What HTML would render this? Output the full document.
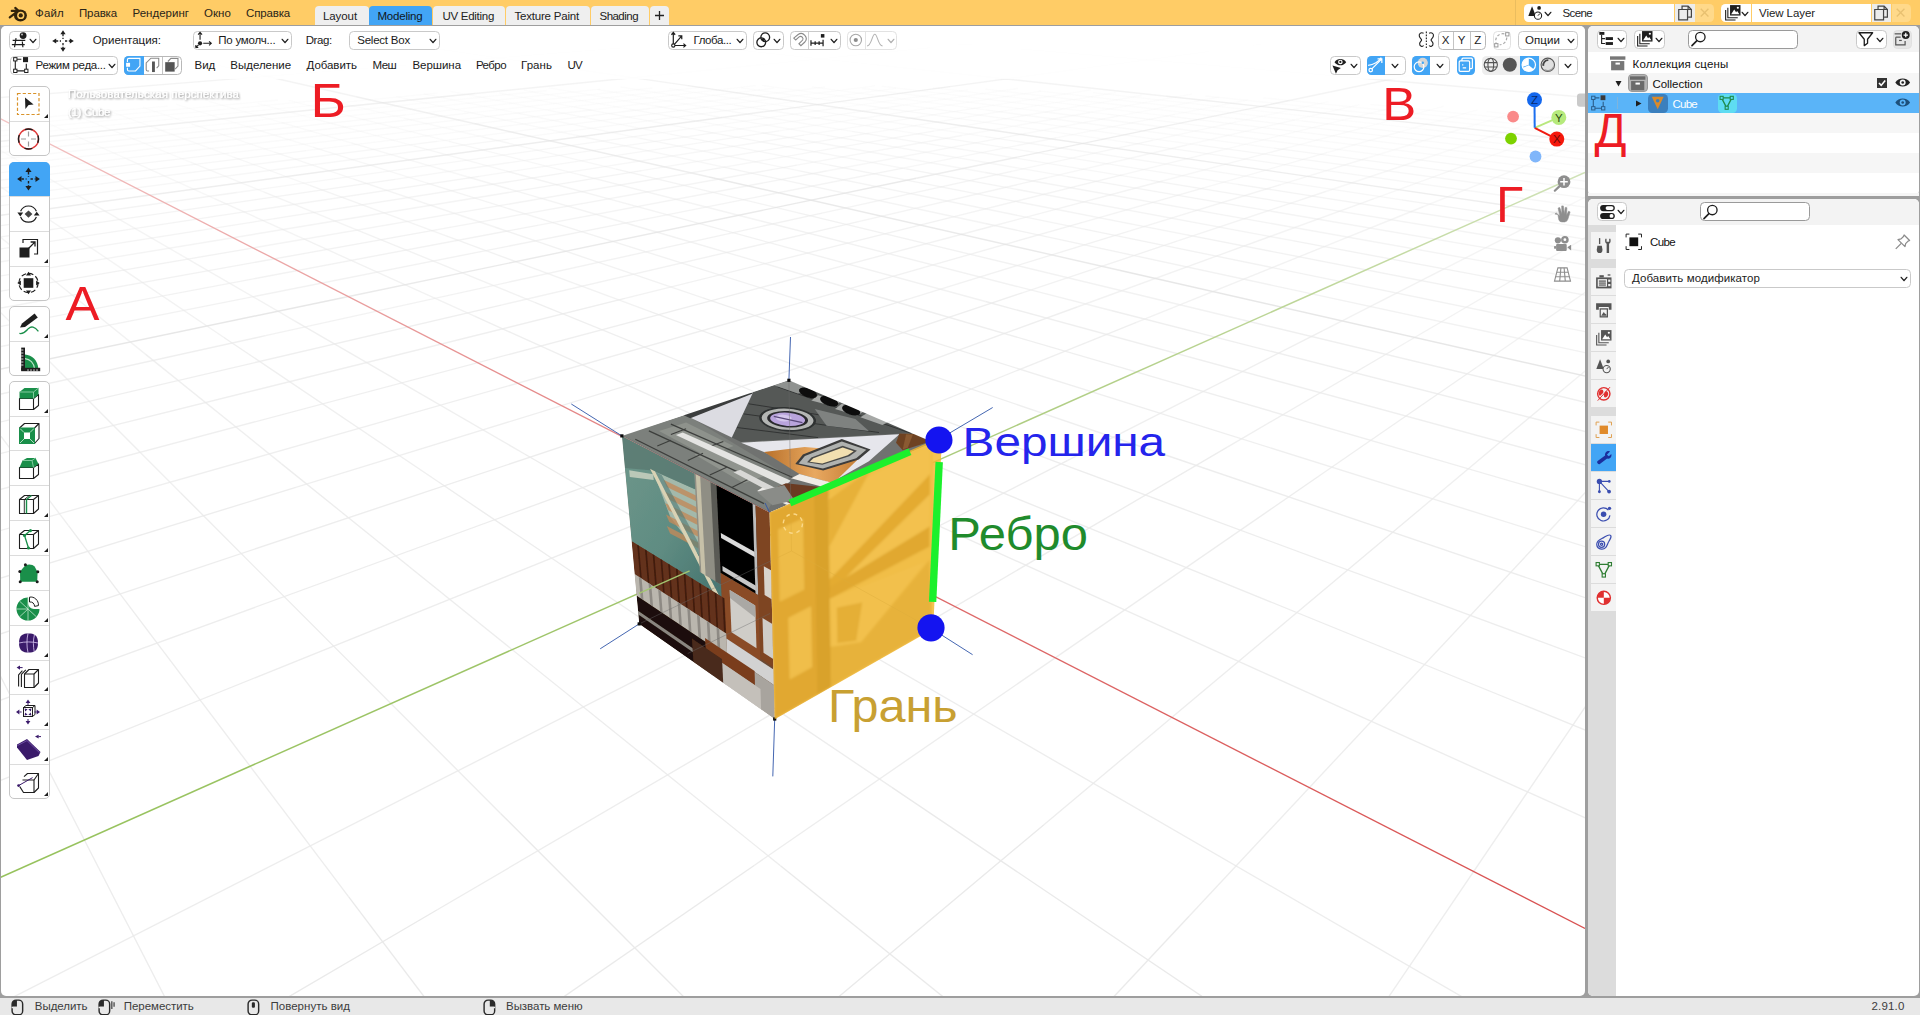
<!DOCTYPE html>
<html><head><meta charset="utf-8"><title>Blender</title>
<style>
html,body{margin:0;padding:0}
html{overflow:hidden;width:1920px;height:1015px}
body{width:1920px;height:1015px;overflow:hidden;position:relative;background:#9e9e9e;font-family:"Liberation Sans",sans-serif;font-size:11.5px;color:#1a1a1a}
.a{position:absolute;overflow:visible}
.t{position:absolute;white-space:nowrap;line-height:1}
.area{position:absolute;overflow:hidden;background:#fff}
.btn{position:absolute;box-sizing:border-box;border:1px solid #c9c9c9;border-radius:4.5px;background:#fff}
.blue{position:absolute;box-sizing:border-box;background:#42a5f5}
.fill{position:absolute;box-sizing:border-box}

</style></head>
<body>
<div class="fill" style="left:0;top:0;width:1920px;height:25px;background:#ffcc66"></div>
<svg class="a" style="left:7.6px;top:4.7px;" width="19.8" height="17.6" viewBox="0 0 18 16"><g fill="none" stroke="#33240c" stroke-linecap="round" stroke-linejoin="round"><path d="M1.6 11.2 L9.6 5.2 M3.4 5.4 H9.2 M9.6 5.2 L6.6 2.6" stroke-width="2"/></g>
<ellipse cx="11.3" cy="9.6" rx="5.9" ry="5.4" fill="#33240c"/><circle cx="11.6" cy="9.5" r="3.3" fill="#ffcc66"/><circle cx="11.6" cy="9.5" r="1.9" fill="#33240c"/></svg>
<span class="t" style="left:35.0px;top:8.27px;font-size:11.5px;color:#2a2418;letter-spacing:0.182px;">Файл</span>
<span class="t" style="left:79.0px;top:8.27px;font-size:11.5px;color:#2a2418;letter-spacing:-0.141px;">Правка</span>
<span class="t" style="left:132.5px;top:8.27px;font-size:11.5px;color:#2a2418;letter-spacing:0.013px;">Рендеринг</span>
<span class="t" style="left:204.0px;top:8.27px;font-size:11.5px;color:#2a2418;letter-spacing:0.069px;">Окно</span>
<span class="t" style="left:246.0px;top:8.27px;font-size:11.5px;color:#2a2418;letter-spacing:-0.159px;">Справка</span>
<div class="fill" style="left:314.5px;top:5.5px;width:54.0px;height:19.5px;background:#efefef;border-radius:4px 4px 0 0"></div>
<span class="t" style="left:323.0px;top:11.07px;font-size:11.5px;color:#222;letter-spacing:-0.089px;">Layout</span>
<div class="fill" style="left:369.0px;top:5.5px;width:63.0px;height:19.5px;background:#42a5f5;border-radius:4px 4px 0 0"></div>
<span class="t" style="left:377.5px;top:11.07px;font-size:11.5px;color:#10151c;letter-spacing:-0.209px;">Modeling</span>
<div class="fill" style="left:433.0px;top:5.5px;width:71.5px;height:19.5px;background:#efefef;border-radius:4px 4px 0 0"></div>
<span class="t" style="left:442.5px;top:11.07px;font-size:11.5px;color:#222;letter-spacing:-0.283px;">UV Editing</span>
<div class="fill" style="left:505.5px;top:5.5px;width:84.0px;height:19.5px;background:#efefef;border-radius:4px 4px 0 0"></div>
<span class="t" style="left:514.5px;top:11.07px;font-size:11.5px;color:#222;letter-spacing:-0.202px;">Texture Paint</span>
<div class="fill" style="left:590.5px;top:5.5px;width:58.0px;height:19.5px;background:#efefef;border-radius:4px 4px 0 0"></div>
<span class="t" style="left:599.5px;top:11.07px;font-size:11.5px;color:#222;letter-spacing:-0.530px;">Shading</span>
<div class="fill" style="left:649.5px;top:5.5px;width:19.0px;height:19.5px;background:#efefef;border-radius:4px 4px 0 0"></div>
<svg class="a" style="left:654.0px;top:10.0px;" width="11.0" height="11.0" viewBox="0 0 11 11"><path d="M5.5 1 V10 M1 5.5 H10" stroke="#222" stroke-width="1.3" fill="none"/></svg>
<div class="fill" style="left:1514.5px;top:0.0px;width:1.0px;height:25.0px;background:#ebbd5e"></div>
<div class="fill" style="left:1524.0px;top:4.0px;width:30.5px;height:18.0px;background:#fff;border-radius:4.5px 0 0 4.5px"></div>
<div class="fill" style="left:1555.0px;top:4.0px;width:119.0px;height:18.0px;background:#fff"></div>
<div class="fill" style="left:1674.5px;top:4.0px;width:20.0px;height:18.0px;background:#ececec"></div>
<div class="fill" style="left:1695.0px;top:4.0px;width:19.0px;height:18.0px;background:#ffd98a;border-radius:0 4.5px 4.5px 0"></div>
<span class="t" style="left:1562.5px;top:8.07px;font-size:11.5px;color:#222;letter-spacing:-0.622px;">Scene</span>
<div class="fill" style="left:1721.0px;top:4.0px;width:30.0px;height:18.0px;background:#fff;border-radius:4.5px 0 0 4.5px"></div>
<div class="fill" style="left:1751.5px;top:4.0px;width:119.5px;height:18.0px;background:#fff"></div>
<div class="fill" style="left:1871.5px;top:4.0px;width:19.5px;height:18.0px;background:#ececec"></div>
<div class="fill" style="left:1891.5px;top:4.0px;width:19.5px;height:18.0px;background:#ffd98a;border-radius:0 4.5px 4.5px 0"></div>
<span class="t" style="left:1759.0px;top:8.07px;font-size:11.5px;color:#222;letter-spacing:-0.068px;">View Layer</span>
<svg class="a" style="left:1543.0px;top:9.0px" width="10" height="10" viewBox="-5 -5 10 10"><path d="M-2.8 -1.6 L0 1.6 L2.8 -1.6" fill="none" stroke="#222" stroke-width="1.4" stroke-linecap="round" stroke-linejoin="round"/></svg>
<svg class="a" style="left:1740.0px;top:9.0px" width="10" height="10" viewBox="-5 -5 10 10"><path d="M-2.8 -1.6 L0 1.6 L2.8 -1.6" fill="none" stroke="#222" stroke-width="1.4" stroke-linecap="round" stroke-linejoin="round"/></svg>
<div class="area" id="v3d" style="left:1px;top:26px;width:1584px;height:970px;border-radius:5px">
<svg class="a" style="left:-1px;top:-26px" width="1586" height="1000" viewBox="0 0 1586 1000"><g fill="none"><path d="M-66.3 127.4L167.6 106.1" stroke="#eaeaea" stroke-opacity="0.125" stroke-width="1.35"/><path d="M-59.7 131.5L278.1 100.0" stroke="#eaeaea" stroke-opacity="0.125" stroke-width="1.35"/><path d="M-52.8 135.9L336.8 98.6" stroke="#eaeaea" stroke-opacity="0.125" stroke-width="1.35"/><path d="M-45.6 140.4L437.3 93.1" stroke="#eaeaea" stroke-opacity="0.125" stroke-width="1.35"/><path d="M-30.3 150.0L165.4 129.8" stroke="#eaeaea" stroke-opacity="0.250" stroke-width="1.35"/><path d="M165.4 129.8L546.6 90.5" stroke="#eaeaea" stroke-opacity="0.125" stroke-width="1.35"/><path d="M-22.0 155.2L290.3 122.1" stroke="#eaeaea" stroke-opacity="0.250" stroke-width="1.35"/><path d="M290.3 122.1L600.0 89.2" stroke="#eaeaea" stroke-opacity="0.125" stroke-width="1.35"/><path d="M-13.4 160.6L405.8 114.9" stroke="#eaeaea" stroke-opacity="0.250" stroke-width="1.35"/><path d="M405.8 114.9L652.6 88.0" stroke="#eaeaea" stroke-opacity="0.125" stroke-width="1.35"/><path d="M-83.3 175.1L468.5 113.2" stroke="#eaeaea" stroke-opacity="0.250" stroke-width="1.35"/><path d="M468.5 113.2L704.4 86.8" stroke="#eaeaea" stroke-opacity="0.125" stroke-width="1.35"/><path d="M-75.5 181.5L530.0 111.6" stroke="#eaeaea" stroke-opacity="0.250" stroke-width="1.35"/><path d="M530.0 111.6L755.4 85.6" stroke="#eaeaea" stroke-opacity="0.125" stroke-width="1.35"/><path d="M-67.3 188.3L228.7 153.1" stroke="#eaeaea" stroke-opacity="0.375" stroke-width="1.35"/><path d="M228.7 153.1L590.5 110.0" stroke="#eaeaea" stroke-opacity="0.250" stroke-width="1.35"/><path d="M590.5 110.0L774.1 88.2" stroke="#eaeaea" stroke-opacity="0.125" stroke-width="1.35"/><path d="M-58.7 195.4L306.0 150.7" stroke="#eaeaea" stroke-opacity="0.375" stroke-width="1.35"/><path d="M306.0 150.7L649.9 108.5" stroke="#eaeaea" stroke-opacity="0.250" stroke-width="1.35"/><path d="M649.9 108.5L825.0 87.0" stroke="#eaeaea" stroke-opacity="0.125" stroke-width="1.35"/><path d="M-49.5 203.0L437.3 141.3" stroke="#eaeaea" stroke-opacity="0.375" stroke-width="1.35"/><path d="M437.3 141.3L708.3 106.9" stroke="#eaeaea" stroke-opacity="0.250" stroke-width="1.35"/><path d="M708.3 106.9L875.1 85.8" stroke="#eaeaea" stroke-opacity="0.125" stroke-width="1.35"/><path d="M-39.8 211.0L508.4 139.1" stroke="#eaeaea" stroke-opacity="0.375" stroke-width="1.35"/><path d="M508.4 139.1L765.7 105.4" stroke="#eaeaea" stroke-opacity="0.250" stroke-width="1.35"/><path d="M765.7 105.4L895.8 88.3" stroke="#eaeaea" stroke-opacity="0.125" stroke-width="1.35"/><path d="M-18.6 228.4L236.7 192.5" stroke="#eaeaea" stroke-opacity="0.500" stroke-width="1.35"/><path d="M236.7 192.5L646.4 134.9" stroke="#eaeaea" stroke-opacity="0.375" stroke-width="1.35"/><path d="M646.4 134.9L844.3 107.1" stroke="#eaeaea" stroke-opacity="0.250" stroke-width="1.35"/><path d="M844.3 107.1L967.9 89.8" stroke="#eaeaea" stroke-opacity="0.125" stroke-width="1.35"/><path d="M-7.0 238.0L395.0 179.3" stroke="#eaeaea" stroke-opacity="0.500" stroke-width="1.35"/><path d="M395.0 179.3L713.4 132.9" stroke="#eaeaea" stroke-opacity="0.375" stroke-width="1.35"/><path d="M713.4 132.9L900.6 105.6" stroke="#eaeaea" stroke-opacity="0.250" stroke-width="1.35"/><path d="M900.6 105.6L1017.8 88.5" stroke="#eaeaea" stroke-opacity="0.125" stroke-width="1.35"/><path d="M-101.8 264.4L479.2 176.3" stroke="#eaeaea" stroke-opacity="0.500" stroke-width="1.35"/><path d="M479.2 176.3L779.0 130.9" stroke="#eaeaea" stroke-opacity="0.375" stroke-width="1.35"/><path d="M779.0 130.9L924.4 108.9" stroke="#eaeaea" stroke-opacity="0.250" stroke-width="1.35"/><path d="M924.4 108.9L1041.3 91.2" stroke="#eaeaea" stroke-opacity="0.125" stroke-width="1.35"/><path d="M-91.7 276.4L561.4 173.4" stroke="#eaeaea" stroke-opacity="0.500" stroke-width="1.35"/><path d="M561.4 173.4L803.8 135.2" stroke="#eaeaea" stroke-opacity="0.375" stroke-width="1.35"/><path d="M803.8 135.2L980.6 107.3" stroke="#eaeaea" stroke-opacity="0.250" stroke-width="1.35"/><path d="M980.6 107.3L1091.0 89.9" stroke="#eaeaea" stroke-opacity="0.125" stroke-width="1.35"/><path d="M-80.9 289.3L641.7 170.6" stroke="#eaeaea" stroke-opacity="0.500" stroke-width="1.35"/><path d="M641.7 170.6L869.3 133.2" stroke="#eaeaea" stroke-opacity="0.375" stroke-width="1.35"/><path d="M869.3 133.2L1006.2 110.7" stroke="#eaeaea" stroke-opacity="0.250" stroke-width="1.35"/><path d="M1006.2 110.7L1115.9 92.7" stroke="#eaeaea" stroke-opacity="0.125" stroke-width="1.35"/><path d="M-69.2 303.2L247.9 248.8" stroke="#eaeaea" stroke-opacity="0.625" stroke-width="1.35"/><path d="M247.9 248.8L720.2 167.8" stroke="#eaeaea" stroke-opacity="0.500" stroke-width="1.35"/><path d="M720.2 167.8L933.5 131.2" stroke="#eaeaea" stroke-opacity="0.375" stroke-width="1.35"/><path d="M933.5 131.2L1062.2 109.1" stroke="#eaeaea" stroke-opacity="0.250" stroke-width="1.35"/><path d="M1062.2 109.1L1141.7 95.5" stroke="#eaeaea" stroke-opacity="0.125" stroke-width="1.35"/><path d="M-56.7 318.3L437.4 229.6" stroke="#eaeaea" stroke-opacity="0.625" stroke-width="1.35"/><path d="M437.4 229.6L796.9 165.1" stroke="#eaeaea" stroke-opacity="0.500" stroke-width="1.35"/><path d="M796.9 165.1L961.6 135.5" stroke="#eaeaea" stroke-opacity="0.375" stroke-width="1.35"/><path d="M961.6 135.5L1089.6 112.5" stroke="#eaeaea" stroke-opacity="0.250" stroke-width="1.35"/><path d="M1089.6 112.5L1192.0 94.1" stroke="#eaeaea" stroke-opacity="0.125" stroke-width="1.35"/><path d="M-43.0 334.6L537.6 225.3" stroke="#eaeaea" stroke-opacity="0.625" stroke-width="1.35"/><path d="M537.6 225.3L826.4 171.0" stroke="#eaeaea" stroke-opacity="0.500" stroke-width="1.35"/><path d="M826.4 171.0L1025.6 133.5" stroke="#eaeaea" stroke-opacity="0.375" stroke-width="1.35"/><path d="M1025.6 133.5L1118.0 116.1" stroke="#eaeaea" stroke-opacity="0.250" stroke-width="1.35"/><path d="M1118.0 116.1L1219.3 97.0" stroke="#eaeaea" stroke-opacity="0.125" stroke-width="1.35"/><path d="M-28.2 352.3L635.1 221.1" stroke="#eaeaea" stroke-opacity="0.625" stroke-width="1.35"/><path d="M635.1 221.1L902.8 168.2" stroke="#eaeaea" stroke-opacity="0.500" stroke-width="1.35"/><path d="M902.8 168.2L1056.0 137.9" stroke="#eaeaea" stroke-opacity="0.375" stroke-width="1.35"/><path d="M1056.0 137.9L1174.7 114.4" stroke="#eaeaea" stroke-opacity="0.250" stroke-width="1.35"/><path d="M1174.7 114.4L1247.6 100.0" stroke="#eaeaea" stroke-opacity="0.125" stroke-width="1.35"/><path d="M-153.6 428.0L265.4 335.7" stroke="#eaeaea" stroke-opacity="0.750" stroke-width="1.35"/><path d="M265.4 335.7L822.0 213.1" stroke="#eaeaea" stroke-opacity="0.625" stroke-width="1.35"/><path d="M822.0 213.1L1011.6 171.4" stroke="#eaeaea" stroke-opacity="0.500" stroke-width="1.35"/><path d="M1011.6 171.4L1152.6 140.3" stroke="#eaeaea" stroke-opacity="0.375" stroke-width="1.35"/><path d="M1152.6 140.3L1236.7 121.8" stroke="#eaeaea" stroke-opacity="0.250" stroke-width="1.35"/><path d="M1236.7 121.8L1328.3 101.6" stroke="#eaeaea" stroke-opacity="0.125" stroke-width="1.35"/><path d="M-141.1 455.1L501.1 305.1" stroke="#eaeaea" stroke-opacity="0.750" stroke-width="1.35"/><path d="M501.1 305.1L858.4 221.7" stroke="#eaeaea" stroke-opacity="0.625" stroke-width="1.35"/><path d="M858.4 221.7L1047.3 177.6" stroke="#eaeaea" stroke-opacity="0.500" stroke-width="1.35"/><path d="M1047.3 177.6L1186.8 145.0" stroke="#eaeaea" stroke-opacity="0.375" stroke-width="1.35"/><path d="M1186.8 145.0L1294.0 120.0" stroke="#eaeaea" stroke-opacity="0.250" stroke-width="1.35"/><path d="M1294.0 120.0L1359.3 104.7" stroke="#eaeaea" stroke-opacity="0.125" stroke-width="1.35"/><path d="M-127.3 485.3L624.9 298.4" stroke="#eaeaea" stroke-opacity="0.750" stroke-width="1.35"/><path d="M624.9 298.4L950.2 217.6" stroke="#eaeaea" stroke-opacity="0.625" stroke-width="1.35"/><path d="M950.2 217.6L1123.2 174.6" stroke="#eaeaea" stroke-opacity="0.500" stroke-width="1.35"/><path d="M1123.2 174.6L1222.6 149.9" stroke="#eaeaea" stroke-opacity="0.375" stroke-width="1.35"/><path d="M1222.6 149.9L1327.7 123.8" stroke="#eaeaea" stroke-opacity="0.250" stroke-width="1.35"/><path d="M1327.7 123.8L1391.5 108.0" stroke="#eaeaea" stroke-opacity="0.125" stroke-width="1.35"/><path d="M-111.8 519.2L744.5 291.9" stroke="#eaeaea" stroke-opacity="0.750" stroke-width="1.35"/><path d="M744.5 291.9L991.1 226.5" stroke="#eaeaea" stroke-opacity="0.625" stroke-width="1.35"/><path d="M991.1 226.5L1162.4 181.0" stroke="#eaeaea" stroke-opacity="0.500" stroke-width="1.35"/><path d="M1162.4 181.0L1288.3 147.6" stroke="#eaeaea" stroke-opacity="0.375" stroke-width="1.35"/><path d="M1288.3 147.6L1362.8 127.8" stroke="#eaeaea" stroke-opacity="0.250" stroke-width="1.35"/><path d="M1362.8 127.8L1443.4 106.4" stroke="#eaeaea" stroke-opacity="0.125" stroke-width="1.35"/><path d="M-20.9 634.4L165.1 997.6" stroke="#eaeaea" stroke-opacity="0.875" stroke-width="1.35"/><path d="M165.1 997.6L278.5 1218.9" stroke="#eaeaea" stroke-opacity="1.000" stroke-width="1.35"/><path d="M-94.2 557.5L788.4 306.1" stroke="#eaeaea" stroke-opacity="0.750" stroke-width="1.35"/><path d="M788.4 306.1L1082.6 222.3" stroke="#eaeaea" stroke-opacity="0.625" stroke-width="1.35"/><path d="M1082.6 222.3L1203.7 187.8" stroke="#eaeaea" stroke-opacity="0.500" stroke-width="1.35"/><path d="M1203.7 187.8L1326.9 152.7" stroke="#eaeaea" stroke-opacity="0.375" stroke-width="1.35"/><path d="M1326.9 152.7L1399.4 132.0" stroke="#eaeaea" stroke-opacity="0.250" stroke-width="1.35"/><path d="M1399.4 132.0L1477.5 109.8" stroke="#eaeaea" stroke-opacity="0.125" stroke-width="1.35"/><path d="M-32.2 392.5L68.5 525.7" stroke="#eaeaea" stroke-opacity="0.750" stroke-width="1.35"/><path d="M68.5 525.7L348.7 896.8" stroke="#eaeaea" stroke-opacity="0.875" stroke-width="1.35"/><path d="M348.7 896.8L483.2 1074.9" stroke="#eaeaea" stroke-opacity="1.000" stroke-width="1.35"/><path d="M-74.2 601.1L295.8 487.4" stroke="#eaeaea" stroke-opacity="0.875" stroke-width="1.35"/><path d="M295.8 487.4L907.4 299.3" stroke="#eaeaea" stroke-opacity="0.750" stroke-width="1.35"/><path d="M907.4 299.3L1128.3 231.4" stroke="#eaeaea" stroke-opacity="0.625" stroke-width="1.35"/><path d="M1128.3 231.4L1280.7 184.6" stroke="#eaeaea" stroke-opacity="0.500" stroke-width="1.35"/><path d="M1280.7 184.6L1367.3 158.0" stroke="#eaeaea" stroke-opacity="0.375" stroke-width="1.35"/><path d="M1367.3 158.0L1458.1 130.0" stroke="#eaeaea" stroke-opacity="0.250" stroke-width="1.35"/><path d="M1458.1 130.0L1512.9 113.2" stroke="#eaeaea" stroke-opacity="0.125" stroke-width="1.35"/><path d="M-17.5 294.4L60.5 372.4" stroke="#eaeaea" stroke-opacity="0.625" stroke-width="1.35"/><path d="M60.5 372.4L180.8 493.0" stroke="#eaeaea" stroke-opacity="0.750" stroke-width="1.35"/><path d="M180.8 493.0L500.6 813.4" stroke="#eaeaea" stroke-opacity="0.875" stroke-width="1.35"/><path d="M500.6 813.4L851.0 1164.4" stroke="#eaeaea" stroke-opacity="1.000" stroke-width="1.35"/><path d="M-51.3 651.2L607.5 431.3" stroke="#eaeaea" stroke-opacity="0.875" stroke-width="1.35"/><path d="M607.5 431.3L1022.3 292.8" stroke="#eaeaea" stroke-opacity="0.750" stroke-width="1.35"/><path d="M1022.3 292.8L1177.0 241.2" stroke="#eaeaea" stroke-opacity="0.625" stroke-width="1.35"/><path d="M1177.0 241.2L1325.8 191.5" stroke="#eaeaea" stroke-opacity="0.500" stroke-width="1.35"/><path d="M1325.8 191.5L1409.7 163.5" stroke="#eaeaea" stroke-opacity="0.375" stroke-width="1.35"/><path d="M1409.7 163.5L1497.1 134.3" stroke="#eaeaea" stroke-opacity="0.250" stroke-width="1.35"/><path d="M1497.1 134.3L1549.6 116.8" stroke="#eaeaea" stroke-opacity="0.125" stroke-width="1.35"/><path d="M-7.9 230.5L55.7 281.8" stroke="#eaeaea" stroke-opacity="0.500" stroke-width="1.35"/><path d="M55.7 281.8L145.4 354.1" stroke="#eaeaea" stroke-opacity="0.625" stroke-width="1.35"/><path d="M145.4 354.1L281.3 463.6" stroke="#eaeaea" stroke-opacity="0.750" stroke-width="1.35"/><path d="M281.3 463.6L780.5 865.8" stroke="#eaeaea" stroke-opacity="0.875" stroke-width="1.35"/><path d="M780.5 865.8L986.4 1031.7" stroke="#eaeaea" stroke-opacity="1.000" stroke-width="1.35"/><path d="M-24.6 709.4L769.4 419.4" stroke="#eaeaea" stroke-opacity="0.875" stroke-width="1.35"/><path d="M769.4 419.4L1077.1 307.0" stroke="#eaeaea" stroke-opacity="0.750" stroke-width="1.35"/><path d="M1077.1 307.0L1270.1 236.5" stroke="#eaeaea" stroke-opacity="0.625" stroke-width="1.35"/><path d="M1270.1 236.5L1373.4 198.8" stroke="#eaeaea" stroke-opacity="0.500" stroke-width="1.35"/><path d="M1373.4 198.8L1477.3 160.9" stroke="#eaeaea" stroke-opacity="0.375" stroke-width="1.35"/><path d="M1477.3 160.9L1537.8 138.8" stroke="#eaeaea" stroke-opacity="0.250" stroke-width="1.35"/><path d="M1537.8 138.8L1587.8 120.5" stroke="#eaeaea" stroke-opacity="0.125" stroke-width="1.35"/><path d="M-16.3 175.5L33.0 208.8" stroke="#eaeaea" stroke-opacity="0.375" stroke-width="1.35"/><path d="M33.0 208.8L124.1 270.1" stroke="#eaeaea" stroke-opacity="0.500" stroke-width="1.35"/><path d="M124.1 270.1L223.6 337.2" stroke="#eaeaea" stroke-opacity="0.625" stroke-width="1.35"/><path d="M223.6 337.2L439.0 482.3" stroke="#eaeaea" stroke-opacity="0.750" stroke-width="1.35"/><path d="M439.0 482.3L891.9 787.4" stroke="#eaeaea" stroke-opacity="0.875" stroke-width="1.35"/><path d="M891.9 787.4L1377.0 1114.3" stroke="#eaeaea" stroke-opacity="1.000" stroke-width="1.35"/><path d="M-304.0 903.2L830.8 445.6" stroke="#eaeaea" stroke-opacity="0.875" stroke-width="1.35"/><path d="M830.8 445.6L1136.4 322.4" stroke="#eaeaea" stroke-opacity="0.750" stroke-width="1.35"/><path d="M1136.4 322.4L1324.3 246.6" stroke="#eaeaea" stroke-opacity="0.625" stroke-width="1.35"/><path d="M1324.3 246.6L1423.7 206.5" stroke="#eaeaea" stroke-opacity="0.500" stroke-width="1.35"/><path d="M1423.7 206.5L1522.9 166.6" stroke="#eaeaea" stroke-opacity="0.375" stroke-width="1.35"/><path d="M1522.9 166.6L1580.3 143.4" stroke="#eaeaea" stroke-opacity="0.250" stroke-width="1.35"/><path d="M1580.3 143.4L1597.1 136.6" stroke="#eaeaea" stroke-opacity="0.125" stroke-width="1.35"/><path d="M-9.6 144.7L33.6 169.7" stroke="#eaeaea" stroke-opacity="0.250" stroke-width="1.35"/><path d="M33.6 169.7L88.2 201.3" stroke="#eaeaea" stroke-opacity="0.375" stroke-width="1.35"/><path d="M88.2 201.3L188.0 259.1" stroke="#eaeaea" stroke-opacity="0.500" stroke-width="1.35"/><path d="M188.0 259.1L295.9 321.6" stroke="#eaeaea" stroke-opacity="0.625" stroke-width="1.35"/><path d="M295.9 321.6L524.6 454.0" stroke="#eaeaea" stroke-opacity="0.750" stroke-width="1.35"/><path d="M524.6 454.0L1830.8 1210.3" stroke="#eaeaea" stroke-opacity="0.875" stroke-width="1.35"/><path d="M-284.3 1148.5L1067.3 460.7" stroke="#eaeaea" stroke-opacity="0.875" stroke-width="1.35"/><path d="M1067.3 460.7L1322.0 331.1" stroke="#eaeaea" stroke-opacity="0.750" stroke-width="1.35"/><path d="M1322.0 331.1L1444.1 268.9" stroke="#eaeaea" stroke-opacity="0.625" stroke-width="1.35"/><path d="M1444.1 268.9L1558.2 210.8" stroke="#eaeaea" stroke-opacity="0.500" stroke-width="1.35"/><path d="M1558.2 210.8L1601.8 188.7" stroke="#eaeaea" stroke-opacity="0.375" stroke-width="1.35"/><path d="M34.4 117.2L76.0 136.0" stroke="#eaeaea" stroke-opacity="0.125" stroke-width="1.35"/><path d="M76.0 136.0L126.8 158.9" stroke="#eaeaea" stroke-opacity="0.250" stroke-width="1.35"/><path d="M126.8 158.9L215.0 198.8" stroke="#eaeaea" stroke-opacity="0.375" stroke-width="1.35"/><path d="M215.0 198.8L304.3 239.2" stroke="#eaeaea" stroke-opacity="0.500" stroke-width="1.35"/><path d="M304.3 239.2L475.1 316.4" stroke="#eaeaea" stroke-opacity="0.625" stroke-width="1.35"/><path d="M475.1 316.4L759.2 444.7" stroke="#eaeaea" stroke-opacity="0.750" stroke-width="1.35"/><path d="M759.2 444.7L1887.0 954.3" stroke="#eaeaea" stroke-opacity="0.875" stroke-width="1.35"/><path d="M145.5 1080.7L437.7 909.5" stroke="#eaeaea" stroke-opacity="1.000" stroke-width="1.35"/><path d="M437.7 909.5L1226.9 447.4" stroke="#eaeaea" stroke-opacity="0.875" stroke-width="1.35"/><path d="M1226.9 447.4L1395.8 348.5" stroke="#eaeaea" stroke-opacity="0.750" stroke-width="1.35"/><path d="M1395.8 348.5L1541.0 263.4" stroke="#eaeaea" stroke-opacity="0.625" stroke-width="1.35"/><path d="M1541.0 263.4L1593.6 232.7" stroke="#eaeaea" stroke-opacity="0.500" stroke-width="1.35"/><path d="M71.8 113.8L116.2 131.9" stroke="#eaeaea" stroke-opacity="0.125" stroke-width="1.35"/><path d="M116.2 131.9L191.0 162.3" stroke="#eaeaea" stroke-opacity="0.250" stroke-width="1.35"/><path d="M191.0 162.3L263.6 191.9" stroke="#eaeaea" stroke-opacity="0.375" stroke-width="1.35"/><path d="M263.6 191.9L357.3 230.1" stroke="#eaeaea" stroke-opacity="0.500" stroke-width="1.35"/><path d="M357.3 230.1L534.7 302.3" stroke="#eaeaea" stroke-opacity="0.625" stroke-width="1.35"/><path d="M534.7 302.3L823.9 420.0" stroke="#eaeaea" stroke-opacity="0.750" stroke-width="1.35"/><path d="M823.9 420.0L1609.3 739.8" stroke="#eaeaea" stroke-opacity="0.875" stroke-width="1.35"/><path d="M530.1 1020.0L754.5 865.2" stroke="#eaeaea" stroke-opacity="1.000" stroke-width="1.35"/><path d="M754.5 865.2L1317.9 476.7" stroke="#eaeaea" stroke-opacity="0.875" stroke-width="1.35"/><path d="M1317.9 476.7L1476.3 367.5" stroke="#eaeaea" stroke-opacity="0.750" stroke-width="1.35"/><path d="M1476.3 367.5L1609.8 275.4" stroke="#eaeaea" stroke-opacity="0.625" stroke-width="1.35"/><path d="M107.9 110.6L154.9 128.0" stroke="#eaeaea" stroke-opacity="0.125" stroke-width="1.35"/><path d="M154.9 128.0L233.7 157.1" stroke="#eaeaea" stroke-opacity="0.250" stroke-width="1.35"/><path d="M233.7 157.1L309.8 185.3" stroke="#eaeaea" stroke-opacity="0.375" stroke-width="1.35"/><path d="M309.8 185.3L446.2 235.9" stroke="#eaeaea" stroke-opacity="0.500" stroke-width="1.35"/><path d="M446.2 235.9L649.7 311.3" stroke="#eaeaea" stroke-opacity="0.625" stroke-width="1.35"/><path d="M649.7 311.3L985.7 435.8" stroke="#eaeaea" stroke-opacity="0.750" stroke-width="1.35"/><path d="M985.7 435.8L1646.1 680.5" stroke="#eaeaea" stroke-opacity="0.875" stroke-width="1.35"/><path d="M645.9 1158.5L1043.9 824.7" stroke="#eaeaea" stroke-opacity="1.000" stroke-width="1.35"/><path d="M1043.9 824.7L1419.8 509.5" stroke="#eaeaea" stroke-opacity="0.875" stroke-width="1.35"/><path d="M1419.8 509.5L1564.4 388.3" stroke="#eaeaea" stroke-opacity="0.750" stroke-width="1.35"/><path d="M1564.4 388.3L1600.1 358.4" stroke="#eaeaea" stroke-opacity="0.625" stroke-width="1.35"/><path d="M142.8 107.4L192.2 124.2" stroke="#eaeaea" stroke-opacity="0.125" stroke-width="1.35"/><path d="M192.2 124.2L274.5 152.2" stroke="#eaeaea" stroke-opacity="0.250" stroke-width="1.35"/><path d="M274.5 152.2L353.7 179.1" stroke="#eaeaea" stroke-opacity="0.375" stroke-width="1.35"/><path d="M353.7 179.1L494.6 227.0" stroke="#eaeaea" stroke-opacity="0.500" stroke-width="1.35"/><path d="M494.6 227.0L702.2 297.6" stroke="#eaeaea" stroke-opacity="0.625" stroke-width="1.35"/><path d="M702.2 297.6L1158.2 452.5" stroke="#eaeaea" stroke-opacity="0.750" stroke-width="1.35"/><path d="M1158.2 452.5L1677.9 629.2" stroke="#eaeaea" stroke-opacity="0.875" stroke-width="1.35"/><path d="M1027.0 1089.6L1189.3 916.0" stroke="#eaeaea" stroke-opacity="1.000" stroke-width="1.35"/><path d="M1189.3 916.0L1534.8 546.5" stroke="#eaeaea" stroke-opacity="0.875" stroke-width="1.35"/><path d="M1534.8 546.5L1625.8 449.2" stroke="#eaeaea" stroke-opacity="0.750" stroke-width="1.35"/><path d="M176.4 104.3L247.4 126.6" stroke="#eaeaea" stroke-opacity="0.125" stroke-width="1.35"/><path d="M247.4 126.6L313.6 147.4" stroke="#eaeaea" stroke-opacity="0.250" stroke-width="1.35"/><path d="M313.6 147.4L427.3 183.1" stroke="#eaeaea" stroke-opacity="0.375" stroke-width="1.35"/><path d="M427.3 183.1L540.2 218.6" stroke="#eaeaea" stroke-opacity="0.500" stroke-width="1.35"/><path d="M540.2 218.6L819.8 306.4" stroke="#eaeaea" stroke-opacity="0.625" stroke-width="1.35"/><path d="M819.8 306.4L1705.6 584.5" stroke="#eaeaea" stroke-opacity="0.750" stroke-width="1.35"/><path d="M1367.6 1028.0L1615.7 661.9" stroke="#eaeaea" stroke-opacity="0.875" stroke-width="1.35"/><path d="M208.9 101.4L282.6 122.9" stroke="#eaeaea" stroke-opacity="0.125" stroke-width="1.35"/><path d="M282.6 122.9L351.1 142.9" stroke="#eaeaea" stroke-opacity="0.250" stroke-width="1.35"/><path d="M351.1 142.9L468.0 177.0" stroke="#eaeaea" stroke-opacity="0.375" stroke-width="1.35"/><path d="M468.0 177.0L629.1 224.0" stroke="#eaeaea" stroke-opacity="0.500" stroke-width="1.35"/><path d="M629.1 224.0L865.6 293.0" stroke="#eaeaea" stroke-opacity="0.625" stroke-width="1.35"/><path d="M865.6 293.0L1730.0 545.1" stroke="#eaeaea" stroke-opacity="0.750" stroke-width="1.35"/><path d="M257.8 103.3L316.5 119.3" stroke="#eaeaea" stroke-opacity="0.125" stroke-width="1.35"/><path d="M316.5 119.3L413.9 145.8" stroke="#eaeaea" stroke-opacity="0.250" stroke-width="1.35"/><path d="M413.9 145.8L506.8 171.1" stroke="#eaeaea" stroke-opacity="0.375" stroke-width="1.35"/><path d="M506.8 171.1L670.5 215.7" stroke="#eaeaea" stroke-opacity="0.500" stroke-width="1.35"/><path d="M670.5 215.7L985.5 301.5" stroke="#eaeaea" stroke-opacity="0.625" stroke-width="1.35"/><path d="M985.5 301.5L1751.7 510.2" stroke="#eaeaea" stroke-opacity="0.750" stroke-width="1.35"/><path d="M288.8 100.4L349.2 115.8" stroke="#eaeaea" stroke-opacity="0.125" stroke-width="1.35"/><path d="M349.2 115.8L449.0 141.3" stroke="#eaeaea" stroke-opacity="0.250" stroke-width="1.35"/><path d="M449.0 141.3L580.3 174.9" stroke="#eaeaea" stroke-opacity="0.375" stroke-width="1.35"/><path d="M580.3 174.9L760.9 221.0" stroke="#eaeaea" stroke-opacity="0.500" stroke-width="1.35"/><path d="M760.9 221.0L1111.2 310.5" stroke="#eaeaea" stroke-opacity="0.625" stroke-width="1.35"/><path d="M1111.2 310.5L1596.2 434.4" stroke="#eaeaea" stroke-opacity="0.750" stroke-width="1.35"/><path d="M318.7 97.6L403.9 118.1" stroke="#eaeaea" stroke-opacity="0.125" stroke-width="1.35"/><path d="M403.9 118.1L482.7 137.0" stroke="#eaeaea" stroke-opacity="0.250" stroke-width="1.35"/><path d="M482.7 137.0L616.2 169.1" stroke="#eaeaea" stroke-opacity="0.375" stroke-width="1.35"/><path d="M616.2 169.1L798.3 212.9" stroke="#eaeaea" stroke-opacity="0.500" stroke-width="1.35"/><path d="M798.3 212.9L1243.1 320.0" stroke="#eaeaea" stroke-opacity="0.625" stroke-width="1.35"/><path d="M1243.1 320.0L1620.4 410.7" stroke="#eaeaea" stroke-opacity="0.750" stroke-width="1.35"/><path d="M396.2 96.6L464.6 111.3" stroke="#eaeaea" stroke-opacity="0.125" stroke-width="1.35"/><path d="M464.6 111.3L577.0 135.5" stroke="#eaeaea" stroke-opacity="0.250" stroke-width="1.35"/><path d="M577.0 135.5L723.8 167.2" stroke="#eaeaea" stroke-opacity="0.375" stroke-width="1.35"/><path d="M723.8 167.2L985.4 223.5" stroke="#eaeaea" stroke-opacity="0.500" stroke-width="1.35"/><path d="M985.4 223.5L1662.6 369.4" stroke="#eaeaea" stroke-opacity="0.625" stroke-width="1.35"/><path d="M423.8 93.9L519.3 113.5" stroke="#eaeaea" stroke-opacity="0.125" stroke-width="1.35"/><path d="M519.3 113.5L640.6 138.3" stroke="#eaeaea" stroke-opacity="0.250" stroke-width="1.35"/><path d="M640.6 138.3L799.5 170.8" stroke="#eaeaea" stroke-opacity="0.375" stroke-width="1.35"/><path d="M799.5 170.8L1084.3 229.1" stroke="#eaeaea" stroke-opacity="0.500" stroke-width="1.35"/><path d="M1084.3 229.1L1681.1 351.3" stroke="#eaeaea" stroke-opacity="0.625" stroke-width="1.35"/><path d="M450.5 91.3L547.4 110.2" stroke="#eaeaea" stroke-opacity="0.125" stroke-width="1.35"/><path d="M547.4 110.2L670.0 134.1" stroke="#eaeaea" stroke-opacity="0.250" stroke-width="1.35"/><path d="M670.0 134.1L829.7 165.2" stroke="#eaeaea" stroke-opacity="0.375" stroke-width="1.35"/><path d="M829.7 165.2L1187.0 234.9" stroke="#eaeaea" stroke-opacity="0.500" stroke-width="1.35"/><path d="M1187.0 234.9L1698.1 334.6" stroke="#eaeaea" stroke-opacity="0.625" stroke-width="1.35"/><path d="M499.0 93.0L574.6 107.1" stroke="#eaeaea" stroke-opacity="0.125" stroke-width="1.35"/><path d="M574.6 107.1L698.2 130.1" stroke="#eaeaea" stroke-opacity="0.250" stroke-width="1.35"/><path d="M698.2 130.1L906.3 168.8" stroke="#eaeaea" stroke-opacity="0.375" stroke-width="1.35"/><path d="M906.3 168.8L1293.8 240.9" stroke="#eaeaea" stroke-opacity="0.500" stroke-width="1.35"/><path d="M1293.8 240.9L1590.3 296.1" stroke="#eaeaea" stroke-opacity="0.625" stroke-width="1.35"/><path d="M524.3 90.4L629.3 109.1" stroke="#eaeaea" stroke-opacity="0.125" stroke-width="1.35"/><path d="M629.3 109.1L761.6 132.7" stroke="#eaeaea" stroke-opacity="0.250" stroke-width="1.35"/><path d="M761.6 132.7L985.4 172.5" stroke="#eaeaea" stroke-opacity="0.375" stroke-width="1.35"/><path d="M985.4 172.5L1608.3 283.5" stroke="#eaeaea" stroke-opacity="0.500" stroke-width="1.35"/><path d="M548.9 87.9L654.8 106.0" stroke="#eaeaea" stroke-opacity="0.125" stroke-width="1.35"/><path d="M654.8 106.0L826.7 135.3" stroke="#eaeaea" stroke-opacity="0.250" stroke-width="1.35"/><path d="M826.7 135.3L1066.9 176.3" stroke="#eaeaea" stroke-opacity="0.375" stroke-width="1.35"/><path d="M1066.9 176.3L1625.1 271.6" stroke="#eaeaea" stroke-opacity="0.500" stroke-width="1.35"/><path d="M597.4 89.5L710.1 108.0" stroke="#eaeaea" stroke-opacity="0.125" stroke-width="1.35"/><path d="M710.1 108.0L852.0 131.3" stroke="#eaeaea" stroke-opacity="0.250" stroke-width="1.35"/><path d="M852.0 131.3L1150.9 180.3" stroke="#eaeaea" stroke-opacity="0.375" stroke-width="1.35"/><path d="M1150.9 180.3L1640.8 260.6" stroke="#eaeaea" stroke-opacity="0.500" stroke-width="1.35"/><path d="M620.7 87.0L734.1 104.9" stroke="#eaeaea" stroke-opacity="0.125" stroke-width="1.35"/><path d="M734.1 104.9L917.8 133.9" stroke="#eaeaea" stroke-opacity="0.250" stroke-width="1.35"/><path d="M917.8 133.9L1237.7 184.3" stroke="#eaeaea" stroke-opacity="0.375" stroke-width="1.35"/><path d="M1237.7 184.3L1655.6 250.2" stroke="#eaeaea" stroke-opacity="0.500" stroke-width="1.35"/><path d="M669.6 88.6L789.9 106.9" stroke="#eaeaea" stroke-opacity="0.125" stroke-width="1.35"/><path d="M789.9 106.9L985.3 136.6" stroke="#eaeaea" stroke-opacity="0.250" stroke-width="1.35"/><path d="M985.3 136.6L1401.7 199.8" stroke="#eaeaea" stroke-opacity="0.375" stroke-width="1.35"/><path d="M1401.7 199.8L1669.4 240.4" stroke="#eaeaea" stroke-opacity="0.500" stroke-width="1.35"/><path d="M741.1 87.8L868.8 105.8" stroke="#eaeaea" stroke-opacity="0.125" stroke-width="1.35"/><path d="M868.8 105.8L1125.8 142.2" stroke="#eaeaea" stroke-opacity="0.250" stroke-width="1.35"/><path d="M1125.8 142.2L1601.2 209.4" stroke="#eaeaea" stroke-opacity="0.375" stroke-width="1.35"/><path d="M762.0 85.4L926.4 107.8" stroke="#eaeaea" stroke-opacity="0.125" stroke-width="1.35"/><path d="M926.4 107.8L1198.9 145.1" stroke="#eaeaea" stroke-opacity="0.250" stroke-width="1.35"/><path d="M1198.9 145.1L1614.8 201.9" stroke="#eaeaea" stroke-opacity="0.375" stroke-width="1.35"/><path d="M811.8 86.9L985.3 109.9" stroke="#eaeaea" stroke-opacity="0.125" stroke-width="1.35"/><path d="M985.3 109.9L1274.0 148.1" stroke="#eaeaea" stroke-opacity="0.250" stroke-width="1.35"/><path d="M1274.0 148.1L1627.7 194.9" stroke="#eaeaea" stroke-opacity="0.375" stroke-width="1.35"/><path d="M862.6 88.5L1045.6 112.0" stroke="#eaeaea" stroke-opacity="0.125" stroke-width="1.35"/><path d="M1045.6 112.0L1415.4 159.4" stroke="#eaeaea" stroke-opacity="0.250" stroke-width="1.35"/><path d="M1415.4 159.4L1639.9 188.1" stroke="#eaeaea" stroke-opacity="0.375" stroke-width="1.35"/><path d="M881.8 86.1L1107.3 114.1" stroke="#eaeaea" stroke-opacity="0.125" stroke-width="1.35"/><path d="M1107.3 114.1L1572.2 171.9" stroke="#eaeaea" stroke-opacity="0.250" stroke-width="1.35"/><path d="M1572.2 171.9L1651.6 181.8" stroke="#eaeaea" stroke-opacity="0.375" stroke-width="1.35"/><path d="M933.0 87.6L1170.4 116.3" stroke="#eaeaea" stroke-opacity="0.125" stroke-width="1.35"/><path d="M1170.4 116.3L1662.6 175.7" stroke="#eaeaea" stroke-opacity="0.250" stroke-width="1.35"/><path d="M985.3 89.2L1235.1 118.5" stroke="#eaeaea" stroke-opacity="0.125" stroke-width="1.35"/><path d="M1235.1 118.5L1596.6 160.9" stroke="#eaeaea" stroke-opacity="0.250" stroke-width="1.35"/><path d="M1038.6 90.9L1301.3 120.8" stroke="#eaeaea" stroke-opacity="0.125" stroke-width="1.35"/><path d="M1301.3 120.8L1608.0 155.8" stroke="#eaeaea" stroke-opacity="0.250" stroke-width="1.35"/><path d="M1093.1 92.6L1425.6 129.4" stroke="#eaeaea" stroke-opacity="0.125" stroke-width="1.35"/><path d="M1425.6 129.4L1618.9 150.9" stroke="#eaeaea" stroke-opacity="0.250" stroke-width="1.35"/><path d="M1205.4 96.0L1639.4 141.7" stroke="#eaeaea" stroke-opacity="0.125" stroke-width="1.35"/><path d="M1263.4 97.8L1649.0 137.4" stroke="#eaeaea" stroke-opacity="0.125" stroke-width="1.35"/><path d="M1370.6 104.4L1593.4 126.7" stroke="#eaeaea" stroke-opacity="0.125" stroke-width="1.35"/><path d="M1486.7 111.6L1603.2 123.0" stroke="#eaeaea" stroke-opacity="0.125" stroke-width="1.35"/><path d="M-13.6 69.7L512.8 34.9" stroke="#e3e3e3" stroke-opacity="0.125" stroke-width="1.4"/><path d="M-43.2 101.0L283.8 74.9" stroke="#e3e3e3" stroke-opacity="0.375" stroke-width="1.4"/><path d="M283.8 74.9L622.7 47.9" stroke="#e3e3e3" stroke-opacity="0.250" stroke-width="1.4"/><path d="M622.7 47.9L822.0 32.0" stroke="#e3e3e3" stroke-opacity="0.125" stroke-width="1.4"/><path d="M-89.6 150.3L475.1 93.5" stroke="#e3e3e3" stroke-opacity="0.500" stroke-width="1.4"/><path d="M475.1 93.5L763.4 64.5" stroke="#e3e3e3" stroke-opacity="0.375" stroke-width="1.4"/><path d="M763.4 64.5L929.9 47.8" stroke="#e3e3e3" stroke-opacity="0.250" stroke-width="1.4"/><path d="M929.9 47.8L1059.9 34.7" stroke="#e3e3e3" stroke-opacity="0.125" stroke-width="1.4"/><path d="M-173.3 238.9L722.1 117.5" stroke="#e3e3e3" stroke-opacity="0.625" stroke-width="1.4"/><path d="M722.1 117.5L949.8 86.6" stroke="#e3e3e3" stroke-opacity="0.500" stroke-width="1.4"/><path d="M949.8 86.6L1077.0 69.3" stroke="#e3e3e3" stroke-opacity="0.375" stroke-width="1.4"/><path d="M1077.0 69.3L1208.8 51.5" stroke="#e3e3e3" stroke-opacity="0.250" stroke-width="1.4"/><path d="M1208.8 51.5L1287.5 40.8" stroke="#e3e3e3" stroke-opacity="0.125" stroke-width="1.4"/><path d="M-74.9 384.8L343.9 297.5" stroke="#e3e3e3" stroke-opacity="0.875" stroke-width="1.4"/><path d="M343.9 297.5L916.3 178.2" stroke="#e3e3e3" stroke-opacity="0.750" stroke-width="1.4"/><path d="M916.3 178.2L1162.3 126.9" stroke="#e3e3e3" stroke-opacity="0.625" stroke-width="1.4"/><path d="M1162.3 126.9L1289.3 100.5" stroke="#e3e3e3" stroke-opacity="0.500" stroke-width="1.4"/><path d="M1289.3 100.5L1386.3 80.2" stroke="#e3e3e3" stroke-opacity="0.375" stroke-width="1.4"/><path d="M1386.3 80.2L1462.9 64.3" stroke="#e3e3e3" stroke-opacity="0.250" stroke-width="1.4"/><path d="M1462.9 64.3L1524.8 51.4" stroke="#e3e3e3" stroke-opacity="0.125" stroke-width="1.4"/><path d="M139.3 47.5L195.9 60.3" stroke="#e3e3e3" stroke-opacity="0.125" stroke-width="1.4"/><path d="M195.9 60.3L266.3 76.3" stroke="#e3e3e3" stroke-opacity="0.250" stroke-width="1.4"/><path d="M266.3 76.3L356.2 96.8" stroke="#e3e3e3" stroke-opacity="0.375" stroke-width="1.4"/><path d="M356.2 96.8L475.0 123.8" stroke="#e3e3e3" stroke-opacity="0.500" stroke-width="1.4"/><path d="M475.0 123.8L709.1 177.0" stroke="#e3e3e3" stroke-opacity="0.625" stroke-width="1.4"/><path d="M709.1 177.0L1119.3 270.2" stroke="#e3e3e3" stroke-opacity="0.750" stroke-width="1.4"/><path d="M1119.3 270.2L1708.7 404.2" stroke="#e3e3e3" stroke-opacity="0.875" stroke-width="1.4"/><path d="M365.4 38.4L439.7 49.3" stroke="#e3e3e3" stroke-opacity="0.125" stroke-width="1.4"/><path d="M439.7 49.3L565.3 67.7" stroke="#e3e3e3" stroke-opacity="0.250" stroke-width="1.4"/><path d="M565.3 67.7L687.9 85.6" stroke="#e3e3e3" stroke-opacity="0.375" stroke-width="1.4"/><path d="M687.9 85.6L911.0 118.3" stroke="#e3e3e3" stroke-opacity="0.500" stroke-width="1.4"/><path d="M911.0 118.3L1654.2 227.1" stroke="#e3e3e3" stroke-opacity="0.625" stroke-width="1.4"/><path d="M586.5 33.6L712.6 47.2" stroke="#e3e3e3" stroke-opacity="0.125" stroke-width="1.4"/><path d="M712.6 47.2L876.5 64.9" stroke="#e3e3e3" stroke-opacity="0.250" stroke-width="1.4"/><path d="M876.5 64.9L1166.3 96.2" stroke="#e3e3e3" stroke-opacity="0.375" stroke-width="1.4"/><path d="M1166.3 96.2L1629.3 146.2" stroke="#e3e3e3" stroke-opacity="0.500" stroke-width="1.4"/><path d="M822.0 32.0L1021.0 49.0" stroke="#e3e3e3" stroke-opacity="0.125" stroke-width="1.4"/><path d="M1021.0 49.0L1368.1 78.7" stroke="#e3e3e3" stroke-opacity="0.250" stroke-width="1.4"/><path d="M1368.1 78.7L1615.1 99.8" stroke="#e3e3e3" stroke-opacity="0.375" stroke-width="1.4"/><path d="M1135.2 36.4L1605.8 69.8" stroke="#e3e3e3" stroke-opacity="0.125" stroke-width="1.4"/></g>
<defs>
<linearGradient id="rg" gradientUnits="userSpaceOnUse" x1="0" y1="118.6" x2="1585" y2="928.5"><stop offset="0" stop-color="#f3c4c4"/><stop offset="0.25" stop-color="#e89a9a"/><stop offset="0.5" stop-color="#df7070"/><stop offset="1" stop-color="#d85050"/></linearGradient>
<linearGradient id="gg" gradientUnits="userSpaceOnUse" x1="0" y1="877.5" x2="1585" y2="172.5"><stop offset="0" stop-color="#96c25c"/><stop offset="0.5" stop-color="#a3c670"/><stop offset="0.8" stop-color="#bcd596"/><stop offset="1" stop-color="#d0e2b8"/></linearGradient>
</defs>
<path d="M0 118.6 L1585 928.5" stroke="url(#rg)" stroke-width="1.35" fill="none"/>
<path d="M0 877.5 L1585 172.5" stroke="url(#gg)" stroke-width="1.5" fill="none"/>
<rect x="0" y="26" width="1586" height="53" fill="#fff" fill-opacity="0.85"/>
<g stroke="#2f55a8" stroke-width="0.9" fill="none"><path d="M788.9 380.3 L790.5 337"/><path d="M621.9 435.9 L571.3 404"/><path d="M933.5 442.6 L992.7 407.5"/><path d="M639.2 623.9 L600.2 648.8"/><path d="M774.7 719 L772.8 776.4"/><path d="M932.2 629 L972.6 654.7"/></g>
<defs><clipPath id="cTop"><polygon points="788.9,380.3 621.9,435.9 769.6,512.5 933.5,442.6" fill="#000" /></clipPath><clipPath id="cLeft"><polygon points="621.9,435.9 769.6,512.5 774.7,719.0 639.2,623.9" fill="#000" /></clipPath><clipPath id="cRight"><polygon points="769.6,512.5 933.5,442.6 932.2,629.0 774.7,719.0" fill="#000" /></clipPath><linearGradient id="teal" x1="0" y1="0" x2="1" y2="1"><stop offset="0" stop-color="#6f978b"/><stop offset="0.55" stop-color="#5f8c82"/><stop offset="1" stop-color="#44726d"/></linearGradient><linearGradient id="orng" x1="0" y1="0" x2="1" y2="0"><stop offset="0" stop-color="#b8702a"/><stop offset="0.5" stop-color="#e8a860"/><stop offset="1" stop-color="#c07830"/></linearGradient><filter id="bl1" x="-10%" y="-10%" width="120%" height="120%"><feGaussianBlur stdDeviation="0.7"/></filter><filter id="bl2" x="-10%" y="-10%" width="120%" height="120%"><feGaussianBlur stdDeviation="1.3"/></filter></defs>
<g clip-path="url(#cTop)"><g filter="url(#bl1)"><polygon points="788.9,380.3 621.9,435.9 769.6,512.5 933.5,442.6" fill="#707270" /><polygon points="621.8,435.1 686.1,414.8 789.3,476.6 767.3,510.4" fill="#7c807b" /><polygon points="659.0,430.9 686.1,422.4 733.5,446.1 706.4,456.2" fill="#8e928c" /><polygon points="694.6,454.6 716.6,446.1 767.3,474.9 743.6,483.3" fill="#90948e" /><path d="M648.9 430.9 L784.3 493.5" stroke="#3c3e3c" stroke-width="1.2"/><path d="M635.3 439.3 L764.0 503.6" stroke="#3c3e3c" stroke-width="1.2"/><path d="M670.9 424.1 L794.4 478.2" stroke="#3c3e3c" stroke-width="1.2"/><path d="M657.3 446.1 L670.9 440.2" stroke="#3c3e3c" stroke-width="1.1"/><path d="M687.8 460.5 L703.0 453.2" stroke="#3c3e3c" stroke-width="1.1"/><path d="M709.8 474.9 L726.7 467.2" stroke="#3c3e3c" stroke-width="1.1"/><path d="M731.8 487.6 L750.4 478.2" stroke="#3c3e3c" stroke-width="1.1"/><path d="M670.9 434.6 L686.1 428.8" stroke="#3c3e3c" stroke-width="1.1"/><path d="M706.4 447.8 L723.3 441.4" stroke="#3c3e3c" stroke-width="1.1"/><polygon points="675.9,435.1 682.7,432.5 791.0,480.8 784.3,485.9" fill="#e4e4e2" /><polygon points="733.5,472.3 740.3,469.8 786.0,493.5 777.5,496.0" fill="#d8d8d6" /><polygon points="757.2,490.9 762.3,487.6 794.4,500.3 787.6,505.3" fill="#ecebe8" /><polygon points="752.9,391.9 789.3,380.1 926.4,433.4 902.7,433.4 741.1,441.9 731.8,437.6" fill="#555857" /><path d="M743.6 413.9 L879.0 432.5" stroke="#323433" stroke-width="1"/><path d="M748.7 403.8 L835.0 417.3" stroke="#323433" stroke-width="1"/><path d="M736.9 427.5 L818.1 437.6" stroke="#323433" stroke-width="1"/><path d="M777.5 386.8 L911.2 433.4" stroke="#323433" stroke-width="1"/><polygon points="774.1,385.2 789.3,380.4 814.7,389.4 797.8,393.6" fill="#8f9290" /><polygon points="814.7,408.9 855.4,419.0 868.9,430.9 826.6,425.8" fill="#7f8280" /><polygon points="818.1,395.3 840.1,402.1 833.3,406.3 811.3,400.4" fill="#a6a8a6" /><polygon points="841.8,403.8 863.8,411.4 857.0,415.6 835.0,408.9" fill="#a6a8a6" /><polygon points="867.2,413.1 889.2,421.5 882.4,424.9 860.4,417.3" fill="#a6a8a6" /><ellipse cx="808.0" cy="392.8" rx="9.5" ry="4.6" transform="rotate(20 808.0 392.8)" fill="#101010"/><ellipse cx="829.1" cy="401.2" rx="9.5" ry="4.6" transform="rotate(20 829.1 401.2)" fill="#101010"/><ellipse cx="851.1" cy="410.2" rx="9.5" ry="4.6" transform="rotate(20 851.1 410.2)" fill="#101010"/><polygon points="689.5,417.3 752.9,392.8 731.8,437.6" fill="#dcdce2" /><polygon points="682.7,414.8 750.4,391.9 752.9,393.6 690.3,418.2" fill="#3a3c3c" /><g transform="rotate(4 787.6 419.3)"><ellipse cx="787.6" cy="419.3" rx="28.5" ry="12.2" fill="#2e3030"/><ellipse cx="787.6" cy="419.3" rx="26" ry="10.6" fill="#b4b6b4"/><ellipse cx="787.6" cy="419.3" rx="20.5" ry="8.2" fill="#2a2a2e"/><ellipse cx="787.6" cy="419.3" rx="17.5" ry="6.6" fill="#b9a4dc"/><ellipse cx="783.6" cy="418.3" rx="8" ry="3.4" fill="#d4c6ec"/><path d="M773.6 417.3 L802.6 421.7" stroke="#5a4a7a" stroke-width="1.3"/></g><polygon points="741.1,442.7 899.4,434.2 868.9,461.3 830.0,483.3 764.0,452.0" fill="#e6e6ec" /><polygon points="764.0,452.0 804.6,446.9 865.5,452.0 833.3,483.3 799.5,474.0" fill="url(#orng)" /><polygon points="799.5,474.0 833.3,483.3 824.9,487.6 791.0,478.2" fill="#f0ece6" /><polygon points="786.0,483.3 824.9,487.6 791.0,503.6 762.3,493.5" fill="#6a3a22" /><polygon points="757.2,491.8 784.3,485.0 794.4,500.3 772.4,505.3" fill="#8a8c88" /><polygon points="795.3,463.9 802.9,454.6 841.8,439.0 870.6,449.5 858.7,459.6 823.2,470.6" fill="#3c3c3c" /><polygon points="798.6,463.4 804.9,455.9 841.8,441.4 866.4,449.8 856.2,458.3 822.9,468.4" fill="#b0b2b0" /><polygon points="807.1,462.2 811.3,457.4 842.7,445.8 857.0,450.8 849.4,456.2 822.3,464.7" fill="#4a4a48" /><polygon points="809.7,461.7 813.4,458.3 842.7,447.4 853.7,451.2 847.7,455.2 822.3,463.4" fill="#f2dfb0" /><polygon points="899.4,433.4 927.3,434.2 926.4,442.7 902.7,450.3 896.0,442.7" fill="#6e4224" /><polygon points="906.1,434.2 912.9,434.6 907.8,447.8 902.7,449.5" fill="#8a5a30" /></g></g>
<g clip-path="url(#cLeft)"><g filter="url(#bl1)"><polygon points="621.9,435.9 769.6,512.5 774.7,719.0 639.2,623.9" fill="#6a4a34" /><polygon points="621.9,435.9 716.4,484.9 721.7,596.8 631.6,541.2" fill="url(#teal)" /><polygon points="652.9,470.4 696.6,490.0 700.5,557.0 670.3,516.9" fill="#a3b9ab" /><polygon points="663.5,479.7 697.0,495.9 697.3,501.8 666.8,487.1" fill="#c08a5a" fill-opacity="0.8"/><polygon points="664.3,491.3 697.7,507.7 698.0,513.6 667.6,498.7" fill="#c08a5a" fill-opacity="0.8"/><polygon points="665.1,502.9 698.3,519.6 698.7,525.5 668.4,510.3" fill="#c08a5a" fill-opacity="0.8"/><polygon points="666.0,514.5 699.0,531.4 699.3,537.3 669.3,521.9" fill="#c08a5a" fill-opacity="0.8"/><polygon points="666.8,526.1 699.7,543.2 700.0,549.2 670.1,533.5" fill="#c08a5a" fill-opacity="0.8"/><polygon points="621.9,435.9 694.3,473.4 695.2,489.2 652.9,470.4 624.8,467.9" fill="#5a7a72" fill-opacity="0.85"/><polygon points="650.0,468.8 655.1,471.6 718.9,595.1 712.6,591.2" fill="#d9d2b4" /><polygon points="629.2,470.3 653.2,474.2 653.7,480.0 629.8,476.9" fill="#d0d6c4" fill-opacity="0.8"/><polygon points="655.1,471.6 661.7,475.1 721.2,584.8 721.7,596.8 718.9,595.1" fill="#4c7a76" fill-opacity="0.6"/><polygon points="694.3,473.4 716.4,484.9 721.2,584.8 699.9,572.0" fill="#8f8e84" /><polygon points="695.8,474.2 700.2,476.5 705.6,575.4 701.3,572.8" fill="#c6c0a8" /><polygon points="710.5,481.9 716.4,484.9 721.2,584.8 715.5,581.4" fill="#5a5a54" /><polygon points="716.4,484.9 755.6,505.2 758.3,595.3 720.6,572.9" fill="#050505" /><polygon points="720.8,533.1 757.0,553.3 757.2,558.5 721.1,538.1" fill="#dcdcdc" /><polygon points="722.4,566.1 758.1,587.1 758.2,592.2 722.6,571.1" fill="#c8c8c8" /><polygon points="752.6,503.7 755.6,505.2 758.3,595.3 755.5,593.6" fill="#bdbdbd" /><polygon points="755.6,505.2 769.6,512.5 773.4,667.4 760.3,658.8" fill="#7e4424" /><polygon points="763.8,566.2 771.0,570.3 771.7,599.2 764.6,595.0" fill="#d8d4cc" /><polygon points="720.6,572.9 758.3,595.3 760.3,660.8 723.6,636.8" fill="#8a4c28" /><polygon points="729.7,590.0 755.2,605.4 756.5,648.3 731.5,632.2" fill="#cfcdc8" /><polygon points="762.5,617.9 772.4,624.0 773.2,659.1 763.5,652.8" fill="#cfcdc8" /><polygon points="729.7,590.0 755.2,605.4 755.6,617.7 730.0,598.0" fill="#aaa8a4" /><polygon points="631.6,541.2 724.6,598.6 726.2,633.6 634.6,574.1" fill="#64301a" /><polygon points="637.2,544.7 638.9,545.7 641.8,578.8 640.2,577.7" fill="#3f1c0c" /><polygon points="645.0,549.4 646.7,550.5 649.5,583.7 647.8,582.6" fill="#3f1c0c" /><polygon points="652.7,554.2 654.4,555.3 657.1,588.7 655.4,587.6" fill="#3f1c0c" /><polygon points="660.5,559.0 662.2,560.1 664.7,593.7 663.1,592.6" fill="#3f1c0c" /><polygon points="668.2,563.8 669.9,564.8 672.4,598.6 670.7,597.5" fill="#3f1c0c" /><polygon points="676.0,568.6 677.7,569.6 680.0,603.6 678.3,602.5" fill="#3f1c0c" /><polygon points="683.7,573.4 685.4,574.4 687.6,608.5 685.9,607.5" fill="#3f1c0c" /><polygon points="691.5,578.1 693.1,579.2 695.2,613.5 693.6,612.4" fill="#3f1c0c" /><polygon points="699.2,582.9 700.9,584.0 702.9,618.5 701.2,617.4" fill="#3f1c0c" /><polygon points="707.0,587.7 708.6,588.7 710.5,623.4 708.8,622.3" fill="#3f1c0c" /><polygon points="714.7,592.5 716.4,593.5 718.1,628.4 716.5,627.3" fill="#3f1c0c" /><polygon points="722.4,597.3 724.1,598.3 725.8,633.3 724.1,632.3" fill="#3f1c0c" /><polygon points="634.6,574.1 726.2,633.6 727.2,656.6 636.6,595.7" fill="#bab6ae" /><polygon points="638.8,576.8 641.6,578.6 643.5,600.3 640.7,598.5" fill="#8e8a84" /><polygon points="648.5,583.1 651.3,584.9 653.1,606.8 650.3,604.9" fill="#8e8a84" /><polygon points="658.2,589.4 661.0,591.2 662.7,613.2 660.0,611.4" fill="#8e8a84" /><polygon points="667.9,595.7 670.7,597.5 672.3,619.7 669.6,617.9" fill="#8e8a84" /><polygon points="677.6,602.0 680.4,603.8 681.9,626.2 679.2,624.3" fill="#8e8a84" /><polygon points="687.3,608.4 690.1,610.2 691.5,632.6 688.8,630.8" fill="#8e8a84" /><polygon points="697.0,614.7 699.8,616.5 701.2,639.1 698.4,637.2" fill="#8e8a84" /><polygon points="706.8,621.0 709.5,622.8 710.8,645.6 708.0,643.7" fill="#8e8a84" /><polygon points="716.5,627.3 719.2,629.1 720.4,652.0 717.6,650.2" fill="#8e8a84" /><polygon points="636.6,595.7 727.2,656.6 728.6,686.7 639.2,623.9" fill="#1c0f08" /><polygon points="638.0,610.7 706.2,657.6 706.4,661.6 638.3,614.5" fill="#8a8680" /><polygon points="726.4,638.6 773.5,669.4 773.9,684.9 727.1,653.6" fill="#d2d2d2" /><polygon points="712.0,643.5 773.9,684.9 774.7,719.0 713.7,676.2" fill="#a8a49e" /><polygon points="705.0,637.9 754.6,671.0 755.0,685.3 705.8,651.7" fill="#7a3e1e" /><polygon points="722.2,662.9 760.5,689.0 761.1,709.5 723.2,682.9" fill="#c4c0ba" /><polygon points="691.9,638.5 722.0,658.9 723.2,682.9 693.4,661.9" fill="#4a2a1a" /></g></g>
<path d="M639 593.3 L689.6 570.8" stroke="#a3c670" stroke-width="1.3"/>
<g clip-path="url(#cRight)"><g filter="url(#bl2)"><polygon points="769.6,512.5 933.5,442.6 932.2,629.0 774.7,719.0" fill="#e9dcc0" /><polygon points="769.6,512.5 828.6,487.3 831.4,686.6 774.7,719.0" fill="#8a5a38" /><polygon points="778.3,529.6 802.8,518.8 804.1,589.6 779.9,601.5" fill="#d8d0c4" /><polygon points="788.4,618.0 810.9,606.6 812.0,667.1 789.8,679.3" fill="#e4dcd0" /><polygon points="813.9,493.6 828.6,487.3 831.4,686.6 817.2,694.7" fill="#5a3018" /><polygon points="828.7,497.3 930.2,444.0 929.7,528.1 830.1,591.0" fill="#f4f0e8" /><polygon points="829.9,579.0 930.0,473.9 929.9,494.4 830.1,592.9" fill="#9a6a3a" /><polygon points="830.0,587.0 929.7,526.2 929.6,546.7 830.2,598.9" fill="#8a5a30" /><polygon points="828.8,499.3 871.2,469.2 829.4,547.1" fill="#b0906a" /><polygon points="830.2,598.9 924.7,562.3 861.1,642.1 830.8,646.7" fill="#f0ece0" /><polygon points="836.7,607.6 862.4,602.2 856.3,640.8 837.2,643.3" fill="#a08058" /><polygon points="830.8,646.7 861.1,642.1 929.5,559.8 932.2,629.0 831.4,686.6" fill="#b09878" /></g></g>
<g stroke="#6a6a6a" stroke-opacity="0.45" stroke-width="0.9" fill="none"><path d="M788.9 380.3 L791.5 551 L639.2 623.9 M791.5 551 L932 629"/><path d="M687.7 653.5 L770 613.5"/></g>
<g fill="#0a0a0a"><rect x="787.3" y="378.7" width="3.2" height="3.2"/><rect x="620.3" y="434.3" width="3.2" height="3.2"/><rect x="637.6" y="622.3" width="3.2" height="3.2"/><rect x="773.1" y="717.4" width="3.2" height="3.2"/></g>
<path d="M769.6 512.5 L765 503" stroke="#2f55a8" stroke-width="0.9" fill="none"/>
<polygon points="769.6,512.5 942.0,436.5 933.2,629.0 774.7,719.3" fill="#f2b730" fill-opacity="0.84"/>
<circle cx="792.9" cy="523.6" r="9.6" fill="none" stroke="#fbd98a" stroke-width="1.4" stroke-dasharray="3.8 3.8"/>
<path d="M790 503 L910 451.8" stroke="#1cf02c" stroke-width="7" fill="none"/>
<path d="M939.2 462 L932.6 601.8" stroke="#1cf02c" stroke-width="7.4" fill="none"/>
<circle cx="938.9" cy="440" r="13.6" fill="#1414f0"/><circle cx="931" cy="627.8" r="13.6" fill="#1414f0"/>
<text transform="translate(962.6 456.4) scale(1.18 1)" font-family="Liberation Sans, sans-serif" font-size="40.4" fill="#2424ec">Вершина</text>
<text transform="translate(948.3 549.5) scale(1.053 1)" font-family="Liberation Sans, sans-serif" font-size="46.5" fill="#1f8b2c">Ребро</text>
<text transform="translate(827.9 722.0) scale(1.052 1)" font-family="Liberation Sans, sans-serif" font-size="46.2" fill="#c8a032">Грань</text>
<text transform="translate(65.6 320.0) scale(1.06 1)" font-family="Liberation Sans, sans-serif" font-size="48.1" fill="#ed1c24">А</text>
<text transform="translate(310.6 116.6) scale(1.116 1)" font-family="Liberation Sans, sans-serif" font-size="48.4" fill="#ed1c24">Б</text>
<text transform="translate(1382.2 119.5) scale(1.085 1)" font-family="Liberation Sans, sans-serif" font-size="46.9" fill="#ed1c24">В</text>
<text transform="translate(1496.0 222.4) scale(1.007 1)" font-family="Liberation Sans, sans-serif" font-size="49.7" fill="#ed1c24">Г</text>
<defs><filter id="tsh" x="-5%" y="-40%" width="110%" height="200%"><feGaussianBlur in="SourceAlpha" stdDeviation="1.0" result="b"/><feOffset in="b" dx="0.6" dy="0.9" result="o"/><feComponentTransfer in="o" result="s"><feFuncA type="linear" slope="0.5"/></feComponentTransfer><feMerge><feMergeNode in="s"/><feMergeNode in="SourceGraphic"/></feMerge></filter></defs>
<text x="68" y="98" font-family="Liberation Sans, sans-serif" font-size="11.5" textLength="171" lengthAdjust="spacing" fill="#ffffff" filter="url(#tsh)">Пользовательская перспектива</text>
<text x="68" y="115.8" font-family="Liberation Sans, sans-serif" font-size="11.5" textLength="42.5" lengthAdjust="spacing" fill="#ffffff" filter="url(#tsh)">(1) Cube</text>
<path d="M1534.7 127.8 L1558.8 117.4" stroke="#b9e87e" stroke-width="2"/>
<path d="M1534.7 127.8 L1556.8 139.1" stroke="#f01a10" stroke-width="2"/>
<path d="M1534.7 127.8 L1534.5 99.7" stroke="#1c6ff0" stroke-width="2"/>
<circle cx="1513.1" cy="116.6" r="5.9" fill="#fa8a8a"/><circle cx="1511" cy="138.6" r="5.9" fill="#7dd200"/><circle cx="1535.5" cy="156.5" r="5.9" fill="#80b6fa"/>
<circle cx="1534.5" cy="99.7" r="7.5" fill="#1468ee"/><circle cx="1558.8" cy="117.4" r="7.5" fill="#b6ea7c"/><circle cx="1556.8" cy="139.1" r="7.5" fill="#f5180c"/>
<text x="1534.5" y="103.8" text-anchor="middle" font-family="Liberation Sans, sans-serif" font-size="11.5" fill="#0a2a6a">Z</text>
<text x="1558.8" y="121.5" text-anchor="middle" font-family="Liberation Sans, sans-serif" font-size="11.5" fill="#2a4a10">Y</text>
<text x="1556.8" y="143.2" text-anchor="middle" font-family="Liberation Sans, sans-serif" font-size="11.5" fill="#6a0a08">X</text>
<rect x="1577" y="93.4" width="12" height="13.4" rx="3" fill="#cacaca"/>
<g transform="translate(1563.2 182.5)"><circle r="6.4" cx="0.8" cy="-0.8" fill="#8e8e8e"/><path d="M-3.6 3.6 L-8.4 8.2" stroke="#8e8e8e" stroke-width="2.2" stroke-linecap="round"/><path d="M0.8 -4.6 V3 M-3 -0.8 H4.6" stroke="#fff" stroke-width="1.5"/></g>
<g transform="translate(1562.5 213.5)" fill="#8e8e8e" stroke="#8e8e8e"><path d="M-4.6 1 L-3.6 6.4 Q-3 8.4 -0.6 8.4 H2.2 Q4.6 8.4 5.4 5.6 L7.6 -1.6 L6 -2.2 L4 2 L4.4 -5.8 L2.8 -6 L1.8 0.4 L0.8 -7.6 L-0.8 -7.6 L-0.6 0.6 L-2.8 -6 L-4.4 -5.4 L-2.6 2.6 L-6.4 -0.6 L-7.6 0.6Z" stroke-width="0.6" stroke-linejoin="round"/></g>
<g transform="translate(1562.5 244.5)" fill="#8e8e8e"><circle cx="-4.6" cy="-4.2" r="3.1"/><circle cx="2.4" cy="-4.8" r="3.8"/><circle cx="2.4" cy="-4.8" r="1.4" fill="#fff"/><rect x="-6.4" y="-0.6" width="10.6" height="7" rx="1"/><path d="M4.8 2.8 L8.6 0.2 V6 Z"/><rect x="-8.4" y="1.6" width="2" height="2.6"/></g>
<g transform="translate(1562.5 274.5)" fill="none" stroke="#8e8e8e" stroke-width="1.1"><path d="M-4.6 -6.6 H4.6 L8 6.6 H-8Z"/><path d="M-1.6 -6.6 L-2.8 6.6 M1.6 -6.6 L2.8 6.6 M-5.8 -2.2 H5.8 M-6.9 2.2 H6.9"/></g></svg>
</div>
<div class="area" style="left:1588px;top:26px;width:331px;height:170px;border-radius:5px"></div>
<div class="fill" style="left:1588.0px;top:26.0px;width:331.0px;height:26.0px;background:#f3f3f3;border-radius:5px 5px 0 0"></div>
<div class="fill" style="left:1588.0px;top:73.0px;width:331.0px;height:20.0px;background:#f6f6f6"></div>
<div class="fill" style="left:1588.0px;top:113.0px;width:331.0px;height:20.0px;background:#f6f6f6"></div>
<div class="fill" style="left:1588.0px;top:153.0px;width:331.0px;height:20.0px;background:#f6f6f6"></div>
<div class="fill" style="left:1588.0px;top:193.0px;width:331.0px;height:3.0px;background:#f6f6f6"></div>
<div class="fill" style="left:1588.0px;top:93.0px;width:331.0px;height:20.0px;background:#5ab4f8"></div>
<div class="btn" style="left:1596.5px;top:29.5px;width:30.5px;height:19.0px;"></div>
<div class="btn" style="left:1633.5px;top:29.5px;width:31.0px;height:19.0px;"></div>
<div class="btn" style="left:1687.5px;top:29.5px;width:110.0px;height:19.0px;border-color:#9a9a9a"></div>
<div class="btn" style="left:1855.5px;top:29.5px;width:31.0px;height:19.0px;"></div>
<div class="btn" style="left:1892.5px;top:29.5px;width:19.0px;height:19.0px;background:#e6e6e6;border-color:#e0e0e0"></div>
<svg class="a" style="left:1616.0px;top:35.0px" width="10" height="10" viewBox="-5 -5 10 10"><path d="M-2.8 -1.6 L0 1.6 L2.8 -1.6" fill="none" stroke="#222" stroke-width="1.4" stroke-linecap="round" stroke-linejoin="round"/></svg>
<svg class="a" style="left:1653.5px;top:35.0px" width="10" height="10" viewBox="-5 -5 10 10"><path d="M-2.8 -1.6 L0 1.6 L2.8 -1.6" fill="none" stroke="#222" stroke-width="1.4" stroke-linecap="round" stroke-linejoin="round"/></svg>
<svg class="a" style="left:1875.0px;top:35.0px" width="10" height="10" viewBox="-5 -5 10 10"><path d="M-2.8 -1.6 L0 1.6 L2.8 -1.6" fill="none" stroke="#222" stroke-width="1.4" stroke-linecap="round" stroke-linejoin="round"/></svg>
<span class="t" style="left:1632.5px;top:58.87px;font-size:11.5px;color:#111;letter-spacing:0.177px;">Коллекция сцены</span>
<span class="t" style="left:1652.5px;top:78.67px;font-size:11.5px;color:#111;letter-spacing:-0.050px;">Collection</span>
<span class="t" style="left:1672.5px;top:98.67px;font-size:11.5px;color:#fff;letter-spacing:-0.749px;">Cube</span>
<div class="area" style="left:1588px;top:199px;width:331px;height:797px;border-radius:5px"></div>
<div class="fill" style="left:1588.0px;top:199.0px;width:331.0px;height:26.0px;background:#f3f3f3;border-radius:5px 5px 0 0"></div>
<div class="fill" style="left:1588.0px;top:225.0px;width:28.0px;height:771.0px;background:#dcdcdc;border-radius:0 0 0 5px"></div>
<div class="btn" style="left:1596.5px;top:201.5px;width:30.5px;height:19.0px;"></div>
<svg class="a" style="left:1616.0px;top:207.0px" width="10" height="10" viewBox="-5 -5 10 10"><path d="M-2.8 -1.6 L0 1.6 L2.8 -1.6" fill="none" stroke="#222" stroke-width="1.4" stroke-linecap="round" stroke-linejoin="round"/></svg>
<div class="btn" style="left:1699.5px;top:201.5px;width:110.0px;height:19.0px;border-color:#9a9a9a"></div>
<div class="fill" style="left:1590.5px;top:231.5px;width:25.5px;height:27.5px;background:#f3f3f3"></div>
<div class="fill" style="left:1590.5px;top:267.5px;width:25.5px;height:27.5px;background:#f3f3f3"></div>
<div class="fill" style="left:1590.5px;top:295.5px;width:25.5px;height:27.5px;background:#f3f3f3"></div>
<div class="fill" style="left:1590.5px;top:323.5px;width:25.5px;height:27.5px;background:#f3f3f3"></div>
<div class="fill" style="left:1590.5px;top:351.5px;width:25.5px;height:27.5px;background:#f3f3f3"></div>
<div class="fill" style="left:1590.5px;top:379.5px;width:25.5px;height:27.5px;background:#f3f3f3"></div>
<div class="fill" style="left:1590.5px;top:415.5px;width:25.5px;height:27.5px;background:#f3f3f3"></div>
<div class="fill" style="left:1590.5px;top:443.5px;width:25.5px;height:27.5px;background:#42a5f5"></div>
<div class="fill" style="left:1590.5px;top:471.5px;width:25.5px;height:27.5px;background:#f3f3f3"></div>
<div class="fill" style="left:1590.5px;top:499.5px;width:25.5px;height:27.5px;background:#f3f3f3"></div>
<div class="fill" style="left:1590.5px;top:527.5px;width:25.5px;height:27.5px;background:#f3f3f3"></div>
<div class="fill" style="left:1590.5px;top:555.5px;width:25.5px;height:27.5px;background:#f3f3f3"></div>
<div class="fill" style="left:1590.5px;top:583.5px;width:25.5px;height:27.5px;background:#f3f3f3"></div>
<span class="t" style="left:1650.0px;top:236.67px;font-size:11.5px;color:#111;letter-spacing:-0.624px;">Cube</span>
<div class="btn" style="left:1624.0px;top:268.5px;width:287.0px;height:19.0px;"></div>
<span class="t" style="left:1632.0px;top:273.07px;font-size:11.5px;color:#222;letter-spacing:0.077px;">Добавить модификатор</span>
<svg class="a" style="left:1899.0px;top:274.0px" width="10" height="10" viewBox="-5 -5 10 10"><path d="M-2.8 -1.6 L0 1.6 L2.8 -1.6" fill="none" stroke="#222" stroke-width="1.4" stroke-linecap="round" stroke-linejoin="round"/></svg>
<div class="fill" style="left:0.0px;top:998.0px;width:1920.0px;height:17.0px;background:#e8e8e8"></div>
<span class="t" style="left:34.8px;top:1001.47px;font-size:11.5px;color:#3c3c3c;letter-spacing:-0.045px;">Выделить</span>
<span class="t" style="left:123.8px;top:1001.47px;font-size:11.5px;color:#3c3c3c;letter-spacing:-0.042px;">Переместить</span>
<span class="t" style="left:270.5px;top:1001.47px;font-size:11.5px;color:#3c3c3c;letter-spacing:0.020px;">Повернуть вид</span>
<span class="t" style="left:506.0px;top:1001.47px;font-size:11.5px;color:#3c3c3c;letter-spacing:-0.039px;">Вызвать меню</span>
<span class="t" style="left:1871.5px;top:1001.47px;font-size:11.5px;color:#3c3c3c;letter-spacing:0.171px;">2.91.0</span>
<div class="btn" style="left:8.5px;top:30.5px;width:31.0px;height:19.0px;"></div>
<svg class="a" style="left:11.1px;top:31.2px;" width="19.8" height="17.6" viewBox="0 0 18 16"><g stroke="#1e1e1e" stroke-width="1.1" fill="none"><path d="M1.5 8.5 H13 M0.8 12.3 H12.5 M4.6 6.5 L3.2 14.8 M10.3 9.5 L10.8 14.8"/></g><circle cx="11" cy="4.2" r="3.1" fill="#1e1e1e"/><circle cx="10" cy="3.2" r="0.9" fill="#bbb"/></svg>
<svg class="a" style="left:28.3px;top:35.5px" width="10" height="10" viewBox="-5 -5 10 10"><path d="M-2.8 -1.6 L0 1.6 L2.8 -1.6" fill="none" stroke="#222" stroke-width="1.4" stroke-linecap="round" stroke-linejoin="round"/></svg>
<svg class="a" style="left:51.0px;top:28.5px;" width="24.0" height="24.0" viewBox="0 0 24 24"><g stroke="#1e1e1e" stroke-width="1.3" fill="none" stroke-dasharray="2.2 1.6"><path d="M12 5 V10 M12 14 V19"/><path d="M5 12 H10 M14 12 H19"/></g>
<g fill="#1e1e1e"><path d="M12 1.2 L14.6 5.2 H9.4Z"/><path d="M12 22.8 L14.6 18.8 H9.4Z"/><path d="M1.2 12 L5.2 9.4 V14.6Z"/><path d="M22.8 12 L18.8 9.4 V14.6Z"/></g></svg>
<span class="t" style="left:92.7px;top:35.27px;font-size:11.5px;color:#1a1a1a;letter-spacing:-0.016px;">Ориентация:</span>
<div class="btn" style="left:192.5px;top:30.5px;width:99.0px;height:19.0px;"></div>
<svg class="a" style="left:195.1px;top:31.2px;" width="19.8" height="17.6" viewBox="0 0 18 16"><g stroke="#1e1e1e" fill="none" stroke-width="1"><path d="M4.6 8 V1.5 M2.8 3.3 L4.6 1.3 L6.4 3.3" /><path d="M7.5 11.2 H14.5 M12.8 9.4 L14.8 11.2 L12.8 13"/><path d="M3.2 12.6 L0.8 15 M0.8 12.8 V15 H3"/></g><circle cx="4.6" cy="11.2" r="1.9" fill="#1e1e1e"/></svg>
<span class="t" style="left:218.2px;top:35.27px;font-size:11.5px;color:#1a1a1a;letter-spacing:-0.206px;">По умолч...</span>
<svg class="a" style="left:280.3px;top:35.5px" width="10" height="10" viewBox="-5 -5 10 10"><path d="M-2.8 -1.6 L0 1.6 L2.8 -1.6" fill="none" stroke="#222" stroke-width="1.4" stroke-linecap="round" stroke-linejoin="round"/></svg>
<span class="t" style="left:305.7px;top:35.27px;font-size:11.5px;color:#1a1a1a;letter-spacing:-0.425px;">Drag:</span>
<div class="btn" style="left:349.0px;top:30.5px;width:90.5px;height:19.0px;"></div>
<span class="t" style="left:357.2px;top:35.27px;font-size:11.5px;color:#1a1a1a;letter-spacing:-0.217px;">Select Box</span>
<svg class="a" style="left:428.0px;top:35.5px" width="10" height="10" viewBox="-5 -5 10 10"><path d="M-2.8 -1.6 L0 1.6 L2.8 -1.6" fill="none" stroke="#222" stroke-width="1.4" stroke-linecap="round" stroke-linejoin="round"/></svg>
<div class="btn" style="left:667.5px;top:30.5px;width:79.0px;height:19.0px;"></div>
<svg class="a" style="left:670.1px;top:31.2px;" width="19.8" height="17.6" viewBox="0 0 18 16"><g stroke="#1e1e1e" fill="none" stroke-width="1.1"><path d="M3 13.2 V1.5 M1.3 3.4 L3 1.4 L4.7 3.4"/><path d="M3 13.2 H14 M12.2 11.5 L14.2 13.2 L12.2 14.9"/><path d="M3.4 12.8 L10.5 4.6 M7.6 4.4 H10.7 V7.4"/></g><circle cx="3" cy="13.2" r="1.5" fill="#fff" stroke="#1e1e1e" stroke-width="1"/></svg>
<span class="t" style="left:693.5px;top:35.27px;font-size:11.5px;color:#1a1a1a;letter-spacing:-0.415px;">Глоба...</span>
<svg class="a" style="left:735.2px;top:35.5px" width="10" height="10" viewBox="-5 -5 10 10"><path d="M-2.8 -1.6 L0 1.6 L2.8 -1.6" fill="none" stroke="#222" stroke-width="1.4" stroke-linecap="round" stroke-linejoin="round"/></svg>
<div class="btn" style="left:752.5px;top:30.5px;width:31.0px;height:19.0px;"></div>
<svg class="a" style="left:755.2px;top:31.2px;" width="17.6" height="17.6" viewBox="0 0 16 16"><g stroke="#1e1e1e" fill="none" stroke-width="1.2"><circle cx="9.3" cy="5.7" r="4"/><circle cx="5.7" cy="10.3" r="4"/></g><circle cx="7.5" cy="8" r="1.3" fill="#1e1e1e"/></svg>
<svg class="a" style="left:772.3px;top:35.5px" width="10" height="10" viewBox="-5 -5 10 10"><path d="M-2.8 -1.6 L0 1.6 L2.8 -1.6" fill="none" stroke="#222" stroke-width="1.4" stroke-linecap="round" stroke-linejoin="round"/></svg>
<div class="btn" style="left:789.5px;top:30.5px;width:51.0px;height:19.0px;"></div>
<div class="fill" style="left:808.0px;top:31.5px;width:1.0px;height:17.0px;background:#d0d0d0"></div>
<svg class="a" style="left:790.7px;top:31.2px;" width="17.6" height="17.6" viewBox="0 0 16 16"><path d="M2.5 6.5 L6.5 3.2 A4.6 4.6 0 0 1 12.6 10 L9 13.4 L7.2 11.6 L10.6 8.2 A2.2 2.2 0 0 0 7.6 5.2 L4.3 8.2Z" fill="none" stroke="#8a8a8a" stroke-width="1"/></svg>
<svg class="a" style="left:809.2px;top:31.2px;" width="17.6" height="17.6" viewBox="0 0 16 16"><g stroke="#1e1e1e" fill="none" stroke-width="1.1"><path d="M1.5 11 H13 M1.8 8.5 V13.5 M5.6 9.3 V12.7 M9.2 9.3 V12.7 M12.8 8 V13.8"/></g><rect x="10.8" y="2.8" width="3.2" height="3.2" fill="#1e1e1e"/></svg>
<svg class="a" style="left:828.5px;top:35.5px" width="10" height="10" viewBox="-5 -5 10 10"><path d="M-2.8 -1.6 L0 1.6 L2.8 -1.6" fill="none" stroke="#222" stroke-width="1.4" stroke-linecap="round" stroke-linejoin="round"/></svg>
<div class="btn" style="left:846.5px;top:30.5px;width:50.5px;height:19.0px;border-color:#e2e2e2"></div>
<div class="fill" style="left:865.0px;top:31.5px;width:1.0px;height:17.0px;background:#e4e4e4"></div>
<svg class="a" style="left:847.2px;top:31.2px;" width="17.6" height="17.6" viewBox="0 0 16 16"><circle cx="8" cy="8.2" r="5.2" fill="none" stroke="#a8a8a8" stroke-width="1"/><circle cx="8" cy="8.2" r="1.9" fill="#8c8c8c"/></svg>
<svg class="a" style="left:866.2px;top:31.2px;" width="17.6" height="17.6" viewBox="0 0 16 16"><path d="M1 13.5 C5 13.5 5.5 3 8 3 C10.5 3 11 13.5 15 13.5" fill="none" stroke="#b4b4b4" stroke-width="1"/></svg>
<svg class="a" style="left:885.5px;top:35.5px" width="10" height="10" viewBox="-5 -5 10 10"><path d="M-2.8 -1.6 L0 1.6 L2.8 -1.6" fill="none" stroke="#b0b0b0" stroke-width="1.4" stroke-linecap="round" stroke-linejoin="round"/></svg>
<svg class="a" style="left:1417.2px;top:31.2px;" width="18.7" height="17.6" viewBox="0 0 17 16"><g stroke="#1e1e1e" fill="none" stroke-width="1"><path d="M6 2 C3.5 0.8 1.3 2.5 2.2 5 C2.8 6.7 4.2 7.2 4.2 8.2 C4.2 9 2.4 9.6 2.4 11.6 C2.4 14 5 14.6 6 13.2"/><path d="M11 2 C13.5 0.8 15.7 2.5 14.8 5 C14.2 6.7 12.8 7.2 12.8 8.2 C12.8 9 14.6 9.6 14.6 11.6 C14.6 14 12 14.6 11 13.2"/><path d="M8.5 0.5 V15.5" stroke-dasharray="1.5 1.2"/></g></svg>
<div class="btn" style="left:1437.5px;top:30.5px;width:48.5px;height:19.0px;border-color:#b8b8b8"></div>
<div class="fill" style="left:1453.0px;top:31.5px;width:1.0px;height:17.0px;background:#c4c4c4"></div>
<div class="fill" style="left:1469.5px;top:31.5px;width:1.0px;height:17.0px;background:#c4c4c4"></div>
<span class="t" style="left:1441.7px;top:35.27px;font-size:11.5px;color:#1e1e1e;">X</span>
<span class="t" style="left:1457.7px;top:35.27px;font-size:11.5px;color:#1e1e1e;">Y</span>
<span class="t" style="left:1474.2px;top:35.27px;font-size:11.5px;color:#1e1e1e;">Z</span>
<div class="btn" style="left:1492.5px;top:30.5px;width:18.5px;height:19.0px;border-color:#e2e2e2"></div>
<svg class="a" style="left:1493.2px;top:31.2px;" width="17.6" height="17.6" viewBox="0 0 16 16"><path d="M3.5 12.5 A6.5 6.5 0 0 1 12.5 3.5" fill="none" stroke="#aaa" stroke-width="1.1" stroke-dasharray="2.4 1.8"/><path d="M12.5 6 A6.5 6.5 0 0 1 6 12.5" fill="none" stroke="#aaa" stroke-width="1.1" stroke-dasharray="2.4 1.8"/><rect x="1.5" y="11.5" width="3" height="3" fill="#fff" stroke="#999" stroke-width="0.9"/><rect x="11.5" y="1.5" width="3" height="3" fill="#fff" stroke="#999" stroke-width="0.9"/></svg>
<div class="btn" style="left:1517.5px;top:30.5px;width:60.0px;height:19.0px;"></div>
<span class="t" style="left:1525.0px;top:35.27px;font-size:11.5px;color:#1a1a1a;letter-spacing:0.079px;">Опции</span>
<svg class="a" style="left:1566.0px;top:35.5px" width="10" height="10" viewBox="-5 -5 10 10"><path d="M-2.8 -1.6 L0 1.6 L2.8 -1.6" fill="none" stroke="#222" stroke-width="1.4" stroke-linecap="round" stroke-linejoin="round"/></svg>
<div class="btn" style="left:9.5px;top:55.5px;width:108.5px;height:19.0px;"></div>
<svg class="a" style="left:12.2px;top:56.2px;" width="17.6" height="17.6" viewBox="0 0 16 16"><g stroke="#1e1e1e" fill="none" stroke-width="1"><path d="M3 4.5 V12 M4.5 13.5 H11.5 M13 12 V7 M4.5 3 H8.5"/></g><g fill="#fff" stroke="#1e1e1e" stroke-width="0.9"><rect x="1.5" y="1.5" width="3" height="3"/><rect x="1.5" y="12" width="3" height="3"/><rect x="11.5" y="12" width="3" height="3"/></g><rect x="10" y="1" width="4.6" height="4.6" fill="#1e1e1e"/></svg>
<span class="t" style="left:35.6px;top:59.77px;font-size:11.5px;color:#1a1a1a;letter-spacing:-0.299px;">Режим реда...</span>
<svg class="a" style="left:107.0px;top:60.5px" width="10" height="10" viewBox="-5 -5 10 10"><path d="M-2.8 -1.6 L0 1.6 L2.8 -1.6" fill="none" stroke="#222" stroke-width="1.4" stroke-linecap="round" stroke-linejoin="round"/></svg>
<div class="btn" style="left:124.0px;top:55.5px;width:58.0px;height:19.0px;border-color:#b8b8b8"></div>
<div class="blue" style="left:124.0px;top:55.5px;width:19.5px;height:19.0px;border-radius:4.5px 0 0 4.5px"></div>
<div class="fill" style="left:162.3px;top:56.5px;width:1.0px;height:17.0px;background:#c4c4c4"></div>
<svg class="a" style="left:124.7px;top:56.2px;" width="17.6" height="17.6" viewBox="0 0 16 16"><path d="M2.2 5.5 V3.5 Q2.2 2.2 3.5 2.2 H13.6 V9.2 L9.6 13.6 H3.5 Q2.2 13.6 2.2 12.3 V10.6" fill="none" stroke="#fff" stroke-width="1"/><rect x="1" y="6.2" width="3.6" height="3.6" fill="#fff"/></svg>
<svg class="a" style="left:143.7px;top:56.2px;" width="17.6" height="17.6" viewBox="0 0 16 16"><path d="M4.6 13.6 H3.3 Q2 13.6 2 12.3 V6.3 L6.3 2 H13.4 V9 L11.5 11" fill="none" stroke="#8a8a8a" stroke-width="1"/><rect x="7.3" y="5" width="2.6" height="9.6" fill="#555"/></svg>
<svg class="a" style="left:163.2px;top:56.2px;" width="17.6" height="17.6" viewBox="0 0 16 16"><path d="M4.4 5 L7.2 2.2 H13.6 V9.2 L11 12" fill="none" stroke="#8a8a8a" stroke-width="1"/><rect x="2" y="5.6" width="8.6" height="8.6" fill="#555"/></svg>
<span class="t" style="left:194.6px;top:59.77px;font-size:11.5px;color:#1a1a1a;letter-spacing:-0.135px;">Вид</span>
<span class="t" style="left:230.3px;top:59.77px;font-size:11.5px;color:#1a1a1a;letter-spacing:-0.016px;">Выделение</span>
<span class="t" style="left:306.6px;top:59.77px;font-size:11.5px;color:#1a1a1a;letter-spacing:-0.066px;">Добавить</span>
<span class="t" style="left:372.5px;top:59.77px;font-size:11.5px;color:#1a1a1a;letter-spacing:-0.577px;">Меш</span>
<span class="t" style="left:412.5px;top:59.77px;font-size:11.5px;color:#1a1a1a;letter-spacing:-0.052px;">Вершина</span>
<span class="t" style="left:476.0px;top:59.77px;font-size:11.5px;color:#1a1a1a;letter-spacing:-0.562px;">Ребро</span>
<span class="t" style="left:521.0px;top:59.77px;font-size:11.5px;color:#1a1a1a;letter-spacing:0.057px;">Грань</span>
<span class="t" style="left:567.5px;top:59.77px;font-size:11.5px;color:#1a1a1a;letter-spacing:-0.737px;">UV</span>
<div class="btn" style="left:1329.5px;top:55.5px;width:31.0px;height:19.0px;"></div>
<svg class="a" style="left:1331.1px;top:56.2px;" width="19.8" height="17.6" viewBox="0 0 18 16"><path d="M1.3 8.6 L9 11 L6 13 L4.5 16.2Z" fill="#1e1e1e"/><path d="M3.2 5.6 C5.5 1.8 11.5 1.8 13.8 5.6 C11.5 9.4 5.5 9.4 3.2 5.6Z" fill="#1e1e1e"/><circle cx="8.5" cy="5.4" r="2.1" fill="#fff"/><circle cx="8.5" cy="5.4" r="1" fill="#1e1e1e"/></svg>
<svg class="a" style="left:1349.3px;top:60.5px" width="10" height="10" viewBox="-5 -5 10 10"><path d="M-2.8 -1.6 L0 1.6 L2.8 -1.6" fill="none" stroke="#222" stroke-width="1.4" stroke-linecap="round" stroke-linejoin="round"/></svg>
<div class="btn" style="left:1366.5px;top:55.5px;width:39.0px;height:19.0px;"></div>
<div class="blue" style="left:1366.5px;top:55.5px;width:18.5px;height:19.0px;border-radius:4.5px 0 0 4.5px"></div>
<svg class="a" style="left:1367.2px;top:56.2px;" width="17.6" height="17.6" viewBox="0 0 16 16"><g fill="none" stroke="#fff" stroke-width="1.1"><path d="M1 8.5 C6 8 11 5 13 1.5"/><path d="M4.2 12 L13.3 2.8 M9.6 2.6 H13.5 V6.4"/><circle cx="3.4" cy="12.8" r="1.6"/></g></svg>
<svg class="a" style="left:1390.3px;top:60.5px" width="10" height="10" viewBox="-5 -5 10 10"><path d="M-2.8 -1.6 L0 1.6 L2.8 -1.6" fill="none" stroke="#222" stroke-width="1.4" stroke-linecap="round" stroke-linejoin="round"/></svg>
<div class="btn" style="left:1412.0px;top:55.5px;width:38.0px;height:19.0px;"></div>
<div class="blue" style="left:1412.0px;top:55.5px;width:18.0px;height:19.0px;border-radius:4.5px 0 0 4.5px"></div>
<svg class="a" style="left:1412.2px;top:56.2px;" width="17.6" height="17.6" viewBox="0 0 16 16"><circle cx="9.8" cy="6.2" r="4.6" fill="#d6d6d6"/><circle cx="6.4" cy="9.8" r="4.4" fill="none" stroke="#fff" stroke-width="1.1"/><circle cx="9.8" cy="6.2" r="1.1" fill="#42a5f5"/></svg>
<svg class="a" style="left:1435.0px;top:60.5px" width="10" height="10" viewBox="-5 -5 10 10"><path d="M-2.8 -1.6 L0 1.6 L2.8 -1.6" fill="none" stroke="#222" stroke-width="1.4" stroke-linecap="round" stroke-linejoin="round"/></svg>
<div class="blue" style="left:1457.0px;top:55.5px;width:18.0px;height:19.0px;border-radius:4.5px"></div>
<svg class="a" style="left:1457.2px;top:56.2px;" width="17.6" height="17.6" viewBox="0 0 16 16"><g fill="none" stroke="#fff" stroke-width="1.1"><path d="M4.5 4.5 V3 Q4.5 2 5.5 2 H13 Q14 2 14 3 V10.5 Q14 11.5 13 11.5 H11.5"/><rect x="2" y="4.5" width="9.5" height="9.5" rx="1"/><path d="M5.2 7.5 V8.6 M8.3 10.8 H5.2" /></g></svg>
<div class="fill" style="left:1482.0px;top:55.5px;width:75.5px;height:19.0px;background:#eeeeee;border-radius:4.5px 0 0 4.5px"></div>
<div class="blue" style="left:1520.0px;top:55.5px;width:18.5px;height:19.0px;"></div>
<div class="btn" style="left:1557.5px;top:55.5px;width:20.0px;height:19.0px;border-radius:0 4.5px 4.5px 0"></div>
<svg class="a" style="left:1482.2px;top:56.2px;" width="17.6" height="17.6" viewBox="0 0 16 16"><g fill="none" stroke="#555" stroke-width="1"><circle cx="8" cy="8" r="6"/><ellipse cx="8" cy="8" rx="2.6" ry="6"/><path d="M2.2 6 H13.8 M2.2 10 H13.8"/></g></svg>
<svg class="a" style="left:1501.2px;top:56.2px;" width="17.6" height="17.6" viewBox="0 0 16 16"><circle cx="8" cy="8" r="6.4" fill="#555"/></svg>
<svg class="a" style="left:1520.2px;top:56.2px;" width="17.6" height="17.6" viewBox="0 0 16 16"><circle cx="8" cy="8" r="6.1" fill="none" stroke="#fff" stroke-width="1.1"/><path d="M8 2 A6 6 0 0 0 2.3 10 L8 8Z" fill="#fff"/><path d="M2.6 10.6 A6 6 0 0 0 12.5 12 L8 8.4Z" fill="#fff"/></svg>
<svg class="a" style="left:1539.2px;top:56.2px;" width="17.6" height="17.6" viewBox="0 0 16 16"><circle cx="8" cy="8" r="6.1" fill="#e0e0e0" stroke="#555" stroke-width="1"/><path d="M4 9 A4.3 4.3 0 0 1 8.5 3.8" fill="none" stroke="#444" stroke-width="1.6"/><path d="M5 12.5 A6 6 0 0 0 13.3 10" fill="none" stroke="#999" stroke-width="1.2"/></svg>
<svg class="a" style="left:1562.5px;top:60.5px" width="10" height="10" viewBox="-5 -5 10 10"><path d="M-2.8 -1.6 L0 1.6 L2.8 -1.6" fill="none" stroke="#222" stroke-width="1.4" stroke-linecap="round" stroke-linejoin="round"/></svg>
<svg class="a" style="left:1527.2px;top:4.2px;" width="17.6" height="17.6" viewBox="0 0 16 16"><path d="M4.6 2 L8 11 H1.2Z" fill="#1e1e1e"/><circle cx="11" cy="3.6" r="1.7" fill="#1e1e1e"/><circle cx="10" cy="10.6" r="3.3" fill="#fff" stroke="#1e1e1e" stroke-width="1"/><path d="M10 10.6 L11.8 8.6" stroke="#1e1e1e" stroke-width="0.9"/></svg>
<svg class="a" style="left:1724.2px;top:4.2px;" width="17.6" height="17.6" viewBox="0 0 16 16"><g fill="none" stroke="#1e1e1e" stroke-width="1"><path d="M1.5 5.5 V14.5 H10.5"/><path d="M3.5 3.5 V12.5 H12.5"/></g><rect x="5.5" y="1" width="9.5" height="9.5" fill="#1e1e1e"/><path d="M6.5 9.3 L9.3 5 L11 7.4 L12 6.4 L14 9.3Z" fill="#fff"/><circle cx="12.6" cy="3.4" r="1" fill="#fff"/></svg>
<svg class="a" style="left:1675.7px;top:4.2px;" width="17.6" height="17.6" viewBox="0 0 16 16"><g fill="none" stroke="#444" stroke-width="1.1"><path d="M5.5 4.5 V2 H11 L14 5 V12 H11"/><path d="M11 2 V5 H14"/><path d="M2.5 5 H10.5 V14.5 H2.5Z" fill="#ececec"/></g></svg>
<svg class="a" style="left:1872.2px;top:4.2px;" width="17.6" height="17.6" viewBox="0 0 16 16"><g fill="none" stroke="#444" stroke-width="1.1"><path d="M5.5 4.5 V2 H11 L14 5 V12 H11"/><path d="M11 2 V5 H14"/><path d="M2.5 5 H10.5 V14.5 H2.5Z" fill="#ececec"/></g></svg>
<svg class="a" style="left:1697.9px;top:6.4px;" width="13.2" height="13.2" viewBox="0 0 12 12"><path d="M2.5 2.5 L9.5 9.5 M9.5 2.5 L2.5 9.5" stroke="#e8c070" stroke-width="1.2" fill="none"/></svg>
<svg class="a" style="left:1894.4px;top:6.4px;" width="13.2" height="13.2" viewBox="0 0 12 12"><path d="M2.5 2.5 L9.5 9.5 M9.5 2.5 L2.5 9.5" stroke="#e8c070" stroke-width="1.2" fill="none"/></svg>
<svg class="a" style="left:1598.2px;top:30.2px;" width="17.6" height="17.6" viewBox="0 0 16 16"><rect x="1.2" y="1.8" width="4.6" height="2.6" fill="#1e1e1e"/><rect x="7" y="6.5" width="6.6" height="2.6" fill="#1e1e1e"/><rect x="7" y="11" width="6.6" height="2.6" fill="#1e1e1e"/><path d="M3.3 4.5 V12.3 H6.5 M3.3 7.8 H6.5" fill="none" stroke="#1e1e1e" stroke-width="1"/></svg>
<svg class="a" style="left:1636.2px;top:30.2px;" width="17.6" height="17.6" viewBox="0 0 16 16"><g fill="none" stroke="#1e1e1e" stroke-width="1"><path d="M1.5 5.5 V14.5 H10.5"/><path d="M3.5 3.5 V12.5 H12.5"/></g><rect x="5.5" y="1" width="9.5" height="9.5" fill="#1e1e1e"/><path d="M6.5 9.3 L9.3 5 L11 7.4 L12 6.4 L14 9.3Z" fill="#fff"/><circle cx="12.6" cy="3.4" r="1" fill="#fff"/></svg>
<svg class="a" style="left:1689.7px;top:30.2px;" width="17.6" height="17.6" viewBox="0 0 16 16"><circle cx="9.4" cy="6.4" r="4.3" fill="none" stroke="#1e1e1e" stroke-width="1.2"/><path d="M6.3 9.6 L1.8 14.2" stroke="#1e1e1e" stroke-width="1.5" stroke-linecap="round"/></svg>
<svg class="a" style="left:1857.2px;top:30.2px;" width="17.6" height="17.6" viewBox="0 0 16 16"><path d="M1.8 2.5 H14.2 L9.6 8.4 V12 L6.6 14.2 V8.4Z" fill="none" stroke="#1e1e1e" stroke-width="1.2" stroke-linejoin="round"/></svg>
<svg class="a" style="left:1893.2px;top:30.2px;" width="17.6" height="17.6" viewBox="0 0 16 16"><g fill="none" stroke="#555555" stroke-width="1.1"><path d="M1.5 3.5 H7.5"/><path d="M2.5 6.5 V13.5 H11 V10"/><path d="M2.5 6.5 H7"/><path d="M5.5 9.5 H8"/></g><circle cx="11.6" cy="4.6" r="3.6" fill="#1e1e1e"/><path d="M11.6 2.6 V6.6 M9.6 4.6 H13.6" stroke="#fff" stroke-width="1.1"/></svg>
<svg class="a" style="left:1610.3px;top:56.3px;" width="15.4" height="15.4" viewBox="0 0 14 14"><rect x="0" y="0.3" width="14" height="3.1" fill="#777"/><path d="M1 4.6 H13 V13 H1Z" fill="#777"/><rect x="5" y="6" width="4" height="1.8" fill="#fff"/></svg>
<svg class="a" style="left:1614.5px;top:79.5px;" width="7.0" height="7.0" viewBox="0 0 7 7"><path d="M0.5 1 H6.5 L3.5 6.5Z" fill="#1e1e1e"/></svg>
<div class="fill" style="left:1628.0px;top:74.0px;width:19.5px;height:18.0px;background:#b4b4b4;border-radius:4px;border:1px solid #9a9a9a"></div>
<svg class="a" style="left:1630.3px;top:76.3px;" width="15.4" height="15.4" viewBox="0 0 14 14"><rect x="0" y="0.3" width="14" height="3.1" fill="#6a6a6a"/><path d="M1 4.6 H13 V13 H1Z" fill="#6a6a6a"/><rect x="5" y="6" width="4" height="1.8" fill="#fff"/></svg>
<svg class="a" style="left:1877.0px;top:78.0px;" width="10.0" height="10.0" viewBox="0 0 10 10"><rect width="10" height="10" fill="#333"/><path d="M2 5 L4.2 7.4 L8.2 2.6" fill="none" stroke="#fff" stroke-width="1.6"/></svg>
<svg class="a" style="left:1895.3px;top:77.0px;" width="15.4" height="11.0" viewBox="0 0 14 10"><path d="M0.3 5 C3 0.2 11 0.2 13.7 5 C11 9.8 3 9.8 0.3 5Z" fill="#222"/><circle cx="7" cy="5" r="2.7" fill="#f6f6f6"/><circle cx="7" cy="5" r="1.2" fill="#222"/></svg>
<svg class="a" style="left:1895.3px;top:97.0px;" width="15.4" height="11.0" viewBox="0 0 14 10"><path d="M0.3 5 C3 0.2 11 0.2 13.7 5 C11 9.8 3 9.8 0.3 5Z" fill="#1d4f7a"/><circle cx="7" cy="5" r="2.7" fill="#5ab4f8"/><circle cx="7" cy="5" r="1.2" fill="#1d4f7a"/></svg>
<svg class="a" style="left:1589.7px;top:94.2px;" width="17.6" height="17.6" viewBox="0 0 16 16"><g stroke="#2b5d8a" fill="none" stroke-width="1"><path d="M3 5 V11.5 M4.5 13 H10.5 M12 11.5 V7 M4.5 3.5 H8.5"/></g><g fill="none" stroke="#2b5d8a" stroke-width="0.9"><rect x="1.5" y="2" width="3" height="3"/><rect x="1.5" y="11.5" width="3" height="3"/><rect x="10.5" y="11.5" width="3" height="3"/></g><rect x="9.6" y="1.2" width="4.4" height="4.4" fill="#3a3a3a"/></svg>
<div class="fill" style="left:1616.5px;top:97.0px;width:1.0px;height:12.0px;background:#7fb4dc"></div>
<svg class="a" style="left:1634.5px;top:99.5px;" width="7.0" height="7.0" viewBox="0 0 7 7"><path d="M1 0.5 V6.5 L6.5 3.5Z" fill="#1e1e1e"/></svg>
<div class="fill" style="left:1648.0px;top:93.5px;width:20.0px;height:19.0px;background:#3b7fbd;border-radius:4.5px"></div>
<svg class="a" style="left:1650.3px;top:95.3px;" width="15.4" height="15.4" viewBox="0 0 14 14"><path d="M1.6 1.5 H12.4 L7 13Z" fill="#d98a2b"/><circle cx="7" cy="5.2" r="1.6" fill="#3b7fbd"/></svg>
<div class="fill" style="left:1717.5px;top:93.5px;width:19.0px;height:19.0px;background:#5edcf2;border-radius:4.5px"></div>
<svg class="a" style="left:1719.3px;top:95.3px;" width="15.4" height="15.4" viewBox="0 0 14 14"><path d="M2.3 2.6 H11.7 L7 11.6Z" fill="none" stroke="#1e8a4a" stroke-width="1.2"/><g fill="#5edcf2" stroke="#1e8a4a" stroke-width="1"><rect x="1" y="1.2" width="2.8" height="2.8"/><rect x="10.2" y="1.2" width="2.8" height="2.8"/><rect x="5.6" y="10.2" width="2.8" height="2.8"/></g></svg>
<svg class="a" style="left:1599.2px;top:202.7px;" width="17.6" height="17.6" viewBox="0 0 16 16"><rect x="1" y="1.8" width="13.4" height="5.6" rx="2.8" fill="#1e1e1e"/><rect x="6" y="2.9" width="7.2" height="3.4" rx="1.7" fill="#fff"/><rect x="1" y="9" width="13.4" height="5.6" rx="2.8" fill="#1e1e1e"/><rect x="9.6" y="10.1" width="3.6" height="3.4" rx="1.7" fill="#fff"/></svg>
<svg class="a" style="left:1701.7px;top:202.7px;" width="17.6" height="17.6" viewBox="0 0 16 16"><circle cx="9.4" cy="6.4" r="4.3" fill="none" stroke="#1e1e1e" stroke-width="1.2"/><path d="M6.3 9.6 L1.8 14.2" stroke="#1e1e1e" stroke-width="1.5" stroke-linecap="round"/></svg>
<svg class="a" style="left:1625.2px;top:233.2px;" width="17.6" height="17.6" viewBox="0 0 16 16"><rect x="4" y="4" width="8" height="8" fill="#111"/><g fill="none" stroke="#222" stroke-width="0.9"><path d="M1 4 V1 H4 M12 1 H15 V4 M15 12 V15 H12 M4 15 H1 V12"/></g></svg>
<svg class="a" style="left:1894.2px;top:233.2px;" width="17.6" height="17.6" viewBox="0 0 16 16"><g fill="none" stroke="#8a8a8a" stroke-width="1.1" stroke-linejoin="round"><path d="M9.2 1.8 L14.2 6.8 L12.8 7.4 L10.6 9.6 L10 12.4 L3.6 6 L6.4 5.4 L8.6 3.2Z"/><path d="M6.6 9.4 L1.6 14.4"/></g></svg>
<svg class="a" style="left:1594.5px;top:236.7px;" width="17.6" height="17.6" viewBox="0 0 16 16"><g fill="#555555"><rect x="3.6" y="1" width="1.2" height="5.4"/><path d="M2.2 8 H6.2 L6.8 11.5 Q6.8 14.6 4.2 14.6 Q1.6 14.6 1.6 11.5Z"/><path d="M9.4 1.6 Q8.6 5 10.6 6.2 V14.6 H12.8 V6.2 Q14.8 5 14 1.6 L12.9 1.6 V4.4 H10.5 V1.6Z"/></g></svg>
<svg class="a" style="left:1594.5px;top:272.7px;" width="17.6" height="17.6" viewBox="0 0 16 16"><g fill="#555555"><path d="M1 4 H15 V14 H1Z"/><path d="M4 4 V2 H8 V4Z"/></g><rect x="2.5" y="5.6" width="8.4" height="6.8" fill="#f3f3f3"/><g fill="#555555"><rect x="3.5" y="6.8" width="6.4" height="1.1"/><rect x="3.5" y="8.6" width="6.4" height="1.1"/><rect x="3.5" y="10.4" width="6.4" height="1.1"/></g><rect x="12" y="6" width="2" height="2" fill="#f3f3f3"/><rect x="12" y="10" width="2" height="2" fill="#f3f3f3"/><rect x="11.5" y="1.2" width="2.5" height="1.2" fill="#555555"/></svg>
<svg class="a" style="left:1594.5px;top:300.7px;" width="17.6" height="17.6" viewBox="0 0 16 16"><g fill="#555555"><path d="M1 2 H15 V8 H12.5 V5.5 H3.5 V8 H1Z"/><path d="M4.2 6.6 H11.8 V15 H4.2Z"/></g><rect x="5.3" y="7.8" width="5.4" height="6" fill="#f3f3f3"/><path d="M5.6 13.4 L8 10 L9.4 12 L10 11.4 L10.6 13.4Z" fill="#555555"/></svg>
<svg class="a" style="left:1594.5px;top:328.7px;" width="17.6" height="17.6" viewBox="0 0 16 16"><g fill="none" stroke="#555555" stroke-width="1"><path d="M1.5 5.5 V14.5 H10.5"/><path d="M3.5 3.5 V12.5 H12.5"/></g><rect x="5.5" y="1" width="9.5" height="9.5" fill="#555555"/><path d="M6.5 9.3 L9.3 5 L11 7.4 L12 6.4 L14 9.3Z" fill="#fff"/><circle cx="12.6" cy="3.4" r="1" fill="#fff"/></svg>
<svg class="a" style="left:1594.5px;top:356.7px;" width="17.6" height="17.6" viewBox="0 0 16 16"><path d="M4.6 2 L8 11 H1.2Z" fill="#555555"/><circle cx="12" cy="4" r="1.7" fill="#555555"/><circle cx="10.6" cy="11" r="3.3" fill="#f3f3f3" stroke="#555555" stroke-width="1"/><path d="M10.6 11 L12.4 9" stroke="#555555" stroke-width="0.9"/></svg>
<svg class="a" style="left:1594.5px;top:384.7px;" width="17.6" height="17.6" viewBox="0 0 16 16"><circle cx="8" cy="8" r="5.6" fill="none" stroke="#e03030" stroke-width="1.3"/><path d="M4.4 5 C6 3 8 4.5 7.6 6.5 C7.2 8 5.4 8.4 4.6 10 C3 9 3 6.4 4.4 5Z M9.4 6 C10.6 5 12.4 6.4 12 8.6 C11.4 10.8 9.4 11.8 8.4 11 C7.6 10 8.4 7 9.4 6Z" fill="#e03030"/><path d="M2.5 14.2 L13.6 2" stroke="#e03030" stroke-width="0.9" fill="none"/></svg>
<svg class="a" style="left:1594.5px;top:420.7px;" width="17.6" height="17.6" viewBox="0 0 16 16"><rect x="4.2" y="4.2" width="7.6" height="7.6" fill="#e08a2a"/><g fill="none" stroke="#e0a050" stroke-width="0.9"><path d="M1 4 V1 H4 M12 1 H15 V4 M15 12 V15 H12 M4 15 H1 V12"/></g></svg>
<svg class="a" style="left:1594.5px;top:448.7px;" width="17.6" height="17.6" viewBox="0 0 16 16"><path d="M13.6 2.2 C11.4 1.2 8.6 3 9.2 6 L2.4 11 C1.2 12 2.6 14.4 4.4 13.6 L11 8.6 C13.6 9.6 15.6 7.2 14.8 4.6 L12.6 6.6 L10.8 5.2 Z" fill="#1b2f9e"/></svg>
<svg class="a" style="left:1594.5px;top:476.7px;" width="17.6" height="17.6" viewBox="0 0 16 16"><g stroke="#3a4db0" stroke-width="1" fill="none"><path d="M4 4 H12.5 M4 4 V13 M4 4 L12.5 13"/></g><g fill="#3a4db0"><circle cx="4" cy="4" r="2.4"/><circle cx="13" cy="4" r="1.2"/><circle cx="4" cy="13.4" r="1.3"/><circle cx="12.8" cy="13.2" r="1.7"/></g></svg>
<svg class="a" style="left:1594.5px;top:504.7px;" width="17.6" height="17.6" viewBox="0 0 16 16"><path d="M12.2 4.6 A6 6 0 1 0 13.6 9.4" fill="none" stroke="#3a4db0" stroke-width="1.1"/><circle cx="7.8" cy="8.4" r="2.5" fill="#3a4db0"/><circle cx="13.2" cy="3" r="1.5" fill="#3a4db0"/></svg>
<svg class="a" style="left:1594.5px;top:532.7px;" width="17.6" height="17.6" viewBox="0 0 16 16"><g fill="none" stroke="#3a4db0" stroke-width="1.1"><path d="M1.6 10.6 C1.2 6.6 5 5.8 8.2 4 C10.4 2.6 12.6 0.8 14.2 2.2 C15.6 3.6 13.6 5.6 12.4 8 C10.8 11 10.4 15 5.8 14.6 C3.4 14.4 1.8 12.8 1.6 10.6Z"/><circle cx="6" cy="10.2" r="2.8"/><circle cx="6" cy="10.2" r="1"/></g></svg>
<svg class="a" style="left:1594.5px;top:560.7px;" width="17.6" height="17.6" viewBox="0 0 16 16"><path d="M2.5 3 H13.5 L8 13.4Z" fill="none" stroke="#2e7d32" stroke-width="1.2"/><g fill="#f3f3f3" stroke="#2e7d32" stroke-width="1"><rect x="1" y="1.4" width="3" height="3"/><rect x="12" y="1.4" width="3" height="3"/><rect x="6.5" y="11.6" width="3" height="3"/></g></svg>
<svg class="a" style="left:1594.5px;top:588.7px;" width="17.6" height="17.6" viewBox="0 0 16 16"><circle cx="8" cy="8" r="6" fill="#fff" stroke="#e03030" stroke-width="1.3"/><path d="M8 2 A6 6 0 0 0 2 8 H8Z" fill="#e03030"/><path d="M8 14 A6 6 0 0 0 14 8 H8Z" fill="#e03030"/></svg>
<svg class="a" style="left:10.8px;top:998.8px;" width="17.6" height="17.6" viewBox="0 0 16 16"><rect x="1" y="1" width="9.6" height="13.4" rx="3.6" fill="none" stroke="#2a2a2a" stroke-width="1.3"/><path d="M1 7 V4.4 Q1 1 5.4 1 V7Z" fill="#2a2a2a"/><rect x="0.5" y="7" width="5.4" height="1.4" fill="#e8e8e8"/></svg>
<svg class="a" style="left:97.7px;top:998.8px;" width="17.6" height="17.6" viewBox="0 0 16 16"><rect x="1" y="1" width="9.6" height="13.4" rx="3.6" fill="none" stroke="#2a2a2a" stroke-width="1.3"/><path d="M1 7 V4.4 Q1 1 5.4 1 V7Z" fill="#2a2a2a"/><rect x="0.5" y="7" width="5.4" height="1.4" fill="#e8e8e8"/><path d="M12.6 2 V9 M14.6 3 V7" stroke="#2a2a2a" stroke-width="1" fill="none"/></svg>
<svg class="a" style="left:247.2px;top:998.8px;" width="17.6" height="17.6" viewBox="0 0 16 16"><rect x="1" y="1" width="9.6" height="13.4" rx="3.6" fill="none" stroke="#2a2a2a" stroke-width="1.3"/><rect x="4.4" y="3" width="2.8" height="5" rx="1" fill="#2a2a2a"/></svg>
<svg class="a" style="left:483.2px;top:998.8px;" width="17.6" height="17.6" viewBox="0 0 16 16"><rect x="1" y="1" width="9.6" height="13.4" rx="3.6" fill="none" stroke="#2a2a2a" stroke-width="1.3"/><path d="M10.6 7 V4.4 Q10.6 1 6.2 1 V7Z" fill="#2a2a2a"/><rect x="5.7" y="7" width="5.4" height="1.4" fill="#e8e8e8"/></svg>
<svg class="a" style="left:1588px;top:105px" width="60" height="60" viewBox="1588 105 60 60"><text transform="translate(1594.6 146.9) scale(0.97 1)" font-family="Liberation Sans, sans-serif" font-size="48.7" fill="#ed1c24">Д</text></svg>
<div class="btn" style="left:8.5px;top:86.3px;width:41.0px;height:69.7px;border-radius:5px;border-color:#c6c6c6"></div>
<div class="fill" style="left:9.5px;top:120.7px;width:39.0px;height:1.0px;background:#dcdcdc"></div>
<div class="btn" style="left:8.5px;top:161.5px;width:41.0px;height:139.4px;border-radius:5px;border-color:#c6c6c6"></div>
<div class="fill" style="left:9.5px;top:195.8px;width:39.0px;height:1.0px;background:#dcdcdc"></div>
<div class="fill" style="left:9.5px;top:230.7px;width:39.0px;height:1.0px;background:#dcdcdc"></div>
<div class="fill" style="left:9.5px;top:265.6px;width:39.0px;height:1.0px;background:#dcdcdc"></div>
<div class="btn" style="left:8.5px;top:306.3px;width:41.0px;height:69.7px;border-radius:5px;border-color:#c6c6c6"></div>
<div class="fill" style="left:9.5px;top:340.7px;width:39.0px;height:1.0px;background:#dcdcdc"></div>
<div class="btn" style="left:8.5px;top:381.2px;width:41.0px;height:418.2px;border-radius:5px;border-color:#c6c6c6"></div>
<div class="fill" style="left:9.5px;top:415.6px;width:39.0px;height:1.0px;background:#dcdcdc"></div>
<div class="fill" style="left:9.5px;top:450.4px;width:39.0px;height:1.0px;background:#dcdcdc"></div>
<div class="fill" style="left:9.5px;top:485.2px;width:39.0px;height:1.0px;background:#dcdcdc"></div>
<div class="fill" style="left:9.5px;top:520.1px;width:39.0px;height:1.0px;background:#dcdcdc"></div>
<div class="fill" style="left:9.5px;top:555.0px;width:39.0px;height:1.0px;background:#dcdcdc"></div>
<div class="fill" style="left:9.5px;top:589.8px;width:39.0px;height:1.0px;background:#dcdcdc"></div>
<div class="fill" style="left:9.5px;top:624.6px;width:39.0px;height:1.0px;background:#dcdcdc"></div>
<div class="fill" style="left:9.5px;top:659.5px;width:39.0px;height:1.0px;background:#dcdcdc"></div>
<div class="fill" style="left:9.5px;top:694.4px;width:39.0px;height:1.0px;background:#dcdcdc"></div>
<div class="fill" style="left:9.5px;top:729.2px;width:39.0px;height:1.0px;background:#dcdcdc"></div>
<div class="fill" style="left:9.5px;top:764.0px;width:39.0px;height:1.0px;background:#dcdcdc"></div>
<div class="blue" style="left:8.5px;top:161.5px;width:41.0px;height:34.8px;border-radius:5px 5px 0 0"></div>
<svg class="a" style="left:15.0px;top:89.7px;" width="28.0" height="28.0" viewBox="0 0 28 28"><rect x="2.5" y="3.5" width="21.5" height="21" fill="none" stroke="#d9932a" stroke-width="1.2" stroke-dasharray="3.2 2"/><path d="M10 7.5 L18.6 14.6 L13.6 15 L10.4 19Z" fill="#1e1e1e"/></svg>
<svg class="a" style="left:44.0px;top:113.7px;" width="4.0" height="4.0" viewBox="0 0 4 4"><path d="M4 0 V4 H0Z" fill="#1e1e1e"/></svg>
<svg class="a" style="left:15.0px;top:124.6px;" width="28.0" height="28.0" viewBox="0 0 28 28"><circle cx="13.5" cy="14" r="10" fill="none" stroke="#e03a3a" stroke-width="1.4"/><circle cx="13.5" cy="14" r="10" fill="none" stroke="#1e1e1e" stroke-width="1.4" stroke-dasharray="7.85 7.85" stroke-dashoffset="3.9"/><path d="M13.5 6.5 V11.5 M13.5 16.5 V21.5 M6 14 H11 M16 14 H21" stroke="#9a9a9a" stroke-width="1.2"/></svg>
<svg class="a" style="left:15.0px;top:164.9px;" width="28.0" height="28.0" viewBox="0 0 28 28"><g stroke="#1e1e1e" stroke-width="1.4" fill="none" stroke-dasharray="2.4 1.8"><path d="M13.5 7 V12 M13.5 16 V21 M6.5 14 H11.5 M15.5 14 H20.5"/></g><g fill="#1e1e1e"><path d="M13.5 2.6 L16.6 7 H10.4Z"/><path d="M13.5 25.4 L16.6 21 H10.4Z"/><path d="M2.1 14 L6.5 10.9 V17.1Z"/><path d="M24.9 14 L20.5 10.9 V17.1Z"/></g></svg>
<svg class="a" style="left:15.0px;top:199.8px;" width="28.0" height="28.0" viewBox="0 0 28 28"><g fill="none" stroke="#1e1e1e" stroke-width="1.2"><path d="M5.6 11.2 A8.6 8.6 0 0 1 21.4 11.2"/><path d="M5.6 17 A8.6 8.6 0 0 0 21.4 17"/></g><g fill="#1e1e1e"><path d="M2.4 12.6 H8.2 L5.3 16.4Z"/><path d="M18.8 15.6 H24.6 L21.7 11.8Z"/><path d="M13.5 10.4 L17.4 14.1 L13.5 17.8 L9.6 14.1Z" fill="#444"/></g></svg>
<svg class="a" style="left:15.0px;top:234.6px;" width="28.0" height="28.0" viewBox="0 0 28 28"><path d="M8 8 V4.5 H22.5 V19 H19" fill="none" stroke="#1e1e1e" stroke-width="1.2"/><rect x="4.5" y="12.5" width="10" height="10" fill="#1e1e1e"/><path d="M13.5 13.5 L19.6 7.4 M15.6 7 H20 V11.4" fill="none" stroke="#1e1e1e" stroke-width="1.3"/></svg>
<svg class="a" style="left:44.0px;top:258.6px;" width="4.0" height="4.0" viewBox="0 0 4 4"><path d="M4 0 V4 H0Z" fill="#1e1e1e"/></svg>
<svg class="a" style="left:15.0px;top:269.4px;" width="28.0" height="28.0" viewBox="0 0 28 28"><circle cx="13.5" cy="14" r="9.6" fill="none" stroke="#1e1e1e" stroke-width="1.1" stroke-dasharray="5 2.5"/><rect x="8.7" y="9.2" width="9.6" height="9.6" fill="#1e1e1e"/><g fill="#1e1e1e"><path d="M13.5 2.8 L16 6.4 H11Z"/><path d="M13.5 25.2 L16 21.6 H11Z"/><path d="M2.3 14 L5.9 11.5 V16.5Z"/><path d="M24.7 14 L21.1 11.5 V16.5Z"/></g></svg>
<svg class="a" style="left:15.0px;top:309.7px;" width="28.0" height="28.0" viewBox="0 0 28 28"><path d="M5 17.6 L7 13.4 L19.6 3.6 L22.8 7.4 L10 17Z" fill="#1e1e1e"/><path d="M4.4 23.4 C9 24.4 11 21 13.6 18.4 C16.2 16 19.6 16.4 23.4 21.4" fill="none" stroke="#1a8f4a" stroke-width="1.3"/></svg>
<svg class="a" style="left:44.0px;top:333.7px;" width="4.0" height="4.0" viewBox="0 0 4 4"><path d="M4 0 V4 H0Z" fill="#1e1e1e"/></svg>
<svg class="a" style="left:15.0px;top:344.6px;" width="28.0" height="28.0" viewBox="0 0 28 28"><path d="M10 24 V9.5 C17 10 22.6 15 23.4 24Z" fill="#1a8f4a"/><path d="M10 13.6 C15 14 19 18 19.6 24" fill="none" stroke="#bfe6cc" stroke-width="1.1"/><rect x="6.2" y="2.6" width="3.8" height="23" fill="#1e1e1e"/><rect x="6.2" y="22.8" width="19" height="3.4" fill="#1e1e1e"/><path d="M6.2 5 H8.4 M6.2 8 H8.4 M6.2 11 H8.4 M6.2 14 H8.4 M6.2 17 H8.4 M6.2 20 H8.4" stroke="#fff" stroke-width="0.8"/><path d="M13 26.2 V24.2 M16 26.2 V24.2 M19 26.2 V24.2 M22 26.2 V24.2" stroke="#fff" stroke-width="0.8"/></svg>
<svg class="a" style="left:15.0px;top:384.6px;" width="28.0" height="28.0" viewBox="0 0 28 28"><path d="M4.5 13.5 H18.5 V24.5 H4.5Z M18.5 13.5 L23.5 9.5 V20.5 L18.5 24.5" fill="#fff" stroke="#1e1e1e" stroke-width="1.1" stroke-linejoin="round"/><path d="M4.5 13.5 V7 L9.5 3 H23.5 V9.5 L18.5 13.5Z" fill="#1a8f4a"/><path d="M4.5 7 H18.5 L23.5 3 M18.5 7 V13.5" fill="none" stroke="#8fd0a8" stroke-width="0.9"/></svg>
<svg class="a" style="left:44.0px;top:408.6px;" width="4.0" height="4.0" viewBox="0 0 4 4"><path d="M4 0 V4 H0Z" fill="#1e1e1e"/></svg>
<svg class="a" style="left:15.0px;top:419.4px;" width="28.0" height="28.0" viewBox="0 0 28 28"><rect x="4.5" y="9" width="15" height="15.5" fill="#1a8f4a"/><rect x="9" y="13.5" width="6" height="6.5" fill="#fff"/><path d="M4.5 9 L9 13.5 M19.5 9 L15 13.5 M4.5 24.5 L9 20 M19.5 24.5 L15 20" stroke="#bfe6cc" stroke-width="0.9"/><path d="M4.5 9 L9.5 4.5 H24 L19.5 9 M24 4.5 V19.5 L19.5 24.5" fill="none" stroke="#1e1e1e" stroke-width="1.1" stroke-linejoin="round"/><rect x="4.5" y="9" width="15" height="15.5" fill="none" stroke="#1a8f4a" stroke-width="1"/></svg>
<svg class="a" style="left:15.0px;top:454.3px;" width="28.0" height="28.0" viewBox="0 0 28 28"><path d="M4.5 13.5 H18.5 V24.5 H4.5Z M18.5 13.5 L23.5 10 V20.5 L18.5 24.5" fill="#fff" stroke="#1e1e1e" stroke-width="1.1" stroke-linejoin="round"/><path d="M4.5 13.5 L7.5 6.5 L12 4 H20.5 L23.5 10 L18.5 13.5Z" fill="#1a8f4a"/><path d="M7.5 6.5 H17 L18.5 13.5 M17 6.5 L20.5 4" fill="none" stroke="#8fd0a8" stroke-width="0.9"/></svg>
<svg class="a" style="left:15.0px;top:489.1px;" width="28.0" height="28.0" viewBox="0 0 28 28"><g fill="none" stroke="#1e1e1e" stroke-width="1.1" stroke-linejoin="round"><path d="M4.5 10.5 H18.5 V24.5 H4.5Z"/><path d="M18.5 10.5 L23.5 6.5 V20 L18.5 24.5"/><path d="M4.5 10.5 L9.5 6.5 H23.5"/></g><path d="M11.5 10.5 V24.5 M11.5 10.5 L16.5 6.5" stroke="#1a8f4a" stroke-width="1.4" fill="none"/><path d="M9.3 10.5 V24.5 M9.3 10.5 L14.3 6.5" stroke="#1e1e1e" stroke-width="0.9" fill="none"/></svg>
<svg class="a" style="left:44.0px;top:513.1px;" width="4.0" height="4.0" viewBox="0 0 4 4"><path d="M4 0 V4 H0Z" fill="#1e1e1e"/></svg>
<svg class="a" style="left:15.0px;top:524.0px;" width="28.0" height="28.0" viewBox="0 0 28 28"><g fill="none" stroke="#1e1e1e" stroke-width="1.1" stroke-linejoin="round"><path d="M4.5 10.5 H18.5 V24.5 H4.5Z"/><path d="M18.5 10.5 L23.5 6.5 V20 L18.5 24.5"/><path d="M4.5 10.5 L9.5 6.5 H23.5"/></g><path d="M15.5 6.6 L9.5 11.5 L13.5 24" stroke="#1a8f4a" stroke-width="1.3" fill="none"/><g fill="#1a8f4a"><circle cx="15.5" cy="6.6" r="1.6"/><circle cx="9.5" cy="11.5" r="1.6"/><circle cx="13.5" cy="24" r="1.6"/></g></svg>
<svg class="a" style="left:44.0px;top:548.0px;" width="4.0" height="4.0" viewBox="0 0 4 4"><path d="M4 0 V4 H0Z" fill="#1e1e1e"/></svg>
<svg class="a" style="left:15.0px;top:558.9px;" width="28.0" height="28.0" viewBox="0 0 28 28"><path d="M5.2 22.8 L5 12.6 L10.4 6.2 C14 4.6 18 5.6 19.6 7.4 L22.6 13 L22.2 22.8Z" fill="#1a8f4a"/><g fill="#1e1e1e"><circle cx="5.2" cy="22.8" r="1.5"/><circle cx="4.8" cy="12.6" r="1.5"/><circle cx="10.4" cy="5.8" r="1.5"/><circle cx="22.8" cy="12.8" r="1.5"/><circle cx="22.2" cy="22.8" r="1.5"/></g></svg>
<svg class="a" style="left:15.0px;top:593.7px;" width="28.0" height="28.0" viewBox="0 0 28 28"><path d="M13 15 L13 3.5 A11.5 11.5 0 1 0 24.5 15 L19 15 A6 6 0 0 1 13 9Z" fill="#1a8f4a"/><circle cx="13" cy="15" r="11.5" fill="none"/><path d="M13 15 V3.5 M13 15 L4.6 7.2 M13 15 H1.5 M13 15 L4.6 22.8 M13 15 V26.5 M13 15 L21.4 22.8" stroke="#bfe6cc" stroke-width="0.8"/><path d="M14.5 3.2 C19 2 24 6.5 23.4 11.6 L19.6 12.4 C19.4 9.4 17.4 7.6 14.5 8Z" fill="#fff" stroke="#1e1e1e" stroke-width="1"/></svg>
<svg class="a" style="left:44.0px;top:617.6px;" width="4.0" height="4.0" viewBox="0 0 4 4"><path d="M4 0 V4 H0Z" fill="#1e1e1e"/></svg>
<svg class="a" style="left:15.0px;top:628.5px;" width="28.0" height="28.0" viewBox="0 0 28 28"><path d="M4 14 C4 6 8 4.5 13.5 4.5 C19 4.5 23 6 23 14 C23 22 19 23.5 13.5 23.5 C8 23.5 4 22 4 14Z" fill="#3a1a6a"/><path d="M4 14 C9 12.6 18 12.6 23 14 M13 4.5 C11.6 10 11.6 18 13 23.5 M19.4 6 C18 11 18.2 18 19.2 22.4" fill="none" stroke="#cbb8e6" stroke-width="0.9"/></svg>
<svg class="a" style="left:44.0px;top:652.5px;" width="4.0" height="4.0" viewBox="0 0 4 4"><path d="M4 0 V4 H0Z" fill="#1e1e1e"/></svg>
<svg class="a" style="left:15.0px;top:663.4px;" width="28.0" height="28.0" viewBox="0 0 28 28"><g fill="none" stroke="#1e1e1e" stroke-width="1.1" stroke-linejoin="round"><path d="M9.5 11 H19 V24.5 H9.5Z"/><path d="M9.5 11 L14 6.5 H23.5 L19 11 M23.5 6.5 V20 L19 24.5"/><path d="M6.4 24 V11.4 L10.8 6.8"/><path d="M3.6 23.4 V11.8 L7.4 7.6"/></g><path d="M1.6 4.6 L5 2.4 V6.8Z" fill="#3a1a6a"/><path d="M5 4.6 H7.6" stroke="#3a1a6a" stroke-width="1"/></svg>
<svg class="a" style="left:44.0px;top:687.4px;" width="4.0" height="4.0" viewBox="0 0 4 4"><path d="M4 0 V4 H0Z" fill="#1e1e1e"/></svg>
<svg class="a" style="left:15.0px;top:698.2px;" width="28.0" height="28.0" viewBox="0 0 28 28"><g fill="none" stroke="#1e1e1e" stroke-width="1"><rect x="8.5" y="9.5" width="9" height="9"/><path d="M8.5 9.5 L11 7.5 H20 L17.5 9.5 M20 7.5 V16.5 L17.5 18.5"/></g><g fill="#3a1a6a"><path d="M13 1.6 L15.4 5 H10.6Z"/><path d="M13 26.4 L15.4 23 H10.6Z"/><path d="M1 14 L4.4 11.6 V16.4Z"/><path d="M25 14 L21.6 11.6 V16.4Z"/><path d="M9.6 10.6 L12.6 11.2 L10.2 13.6Z"/><path d="M16.4 10.6 L13.4 11.2 L15.8 13.6Z"/><path d="M9.6 17.4 L12.6 16.8 L10.2 14.4Z"/><path d="M16.4 17.4 L13.4 16.8 L15.8 14.4Z"/></g><path d="M13 5 V7 M13 21 V23 M4.4 14 H6.6 M19.4 14 H21.6" stroke="#3a1a6a" stroke-width="1"/></svg>
<svg class="a" style="left:44.0px;top:722.2px;" width="4.0" height="4.0" viewBox="0 0 4 4"><path d="M4 0 V4 H0Z" fill="#1e1e1e"/></svg>
<svg class="a" style="left:15.0px;top:733.1px;" width="28.0" height="28.0" viewBox="0 0 28 28"><path d="M2 11.5 L12 6 L25.5 19 L23.5 23 L12 27 L2 14.5Z" fill="#3a1a6a"/><path d="M2.4 12.6 L12 7.6 L24.6 19.8" fill="none" stroke="#7a5ab0" stroke-width="0.8"/><path d="M20 3.6 L23.6 1.8 V5.6Z" fill="#3a1a6a"/><path d="M23.4 3.6 H26" stroke="#3a1a6a" stroke-width="1"/></svg>
<svg class="a" style="left:44.0px;top:757.1px;" width="4.0" height="4.0" viewBox="0 0 4 4"><path d="M4 0 V4 H0Z" fill="#1e1e1e"/></svg>
<svg class="a" style="left:15.0px;top:767.9px;" width="28.0" height="28.0" viewBox="0 0 28 28"><g fill="none" stroke="#1e1e1e" stroke-width="1.1" stroke-linejoin="round"><path d="M7.5 12 H19 V24.5 H8.5 L4.8 18.6"/><path d="M9 8.6 L12.5 5.5 H23.5 L19 12 M23.5 5.5 V20 L19 24.5"/></g><path d="M3.6 17.6 L17.6 9.6" stroke="#3a1a6a" stroke-width="1"/><circle cx="3.6" cy="17.6" r="1.4" fill="#3a1a6a"/></svg>
<svg class="a" style="left:44.0px;top:791.9px;" width="4.0" height="4.0" viewBox="0 0 4 4"><path d="M4 0 V4 H0Z" fill="#1e1e1e"/></svg>
</body></html>
